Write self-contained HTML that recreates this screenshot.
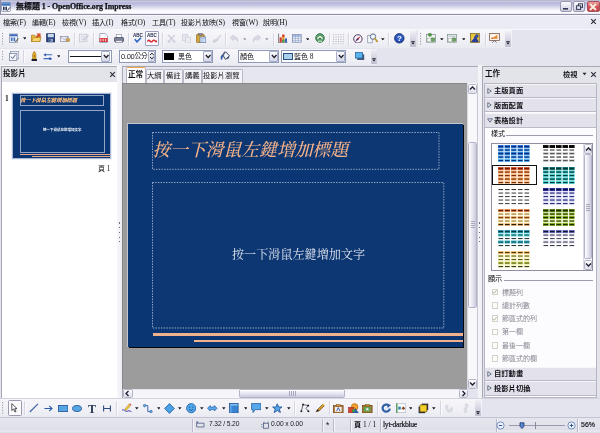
<!DOCTYPE html>
<html lang="zh-TW"><head><meta charset="utf-8"><title>OpenOffice.org Impress</title><style>
html,body{margin:0;padding:0}
body{width:600px;height:433px;overflow:hidden;position:relative;background:#e4e4ee;font-family:"Liberation Serif",serif;font-size:7px}
#w{position:absolute;left:0;top:0;width:600px;height:433px;overflow:hidden;filter:blur(0.45px)}
#w div,#w .a{position:absolute;box-sizing:border-box}
.t{will-change:transform;position:absolute;display:flex;align-items:center;white-space:nowrap;line-height:1}
.t svg{display:block;flex:none}
.t .c{font-family:"Liberation Sans","Noto Sans CJK TC",sans-serif;font-weight:normal;font-style:normal;letter-spacing:0;flex:none}
.t .cb{font-family:"Liberation Sans","Noto Sans CJK TC",sans-serif;font-weight:bold;font-style:normal;letter-spacing:0;flex:none}
.t .cs{font-family:"Liberation Serif","Noto Serif CJK SC",serif;font-style:normal;letter-spacing:0;flex:none}
.t .sk{display:inline-block;transform:skewX(-14deg);transform-origin:0 88%}
.t .l{font-weight:inherit;font-size:var(--l,1.06em)}
</style></head><body>
<div id="w">
<div style="left:0px;top:0px;width:600px;height:15.2px;background:linear-gradient(#a2a2b4 0,#d2d2e8 1px,#b8b8da 2.4px,#c2c2e0 5px,#e2e2f0 8px,#f8f8fc 10.4px,#ffffff 13.4px,#a9a6c0 13.9px,#8f8bab 14.6px,#9a97b4 15.2px)"></div>
<svg class="a" style="left:1px;top:1.6px;" width="10" height="10" viewBox="0 0 10 10"><rect x="0.4" y="0.4" width="9" height="9" rx="0.8" fill="#fafbfe" stroke="#6a7896" stroke-width="0.7"/><rect x="0.7" y="0.7" width="8.4" height="3" fill="#3b74bc"/><rect x="0.7" y="0.7" width="8.4" height="1.2" fill="#6a9ad4"/><rect x="2" y="4.6" width="1.6" height="3.6" fill="#2a3a5c"/><rect x="4.4" y="4.6" width="1.6" height="3.6" fill="#2a3a5c"/><path d="M6.4 8.6L8.8 5.4" stroke="#3a3a4a" stroke-width="1"/></svg>
<div style="left:0px;top:0px;width:0.8px;height:15px;background:#8a8aa4"></div>
<span class="t" style="left:16px;top:1.4px;height:12px;font-size:8px;color:#0c0c12;font-weight:bold;letter-spacing:-0.1px;--l:7.9px;-webkit-text-stroke:0.25px #0c0c12;stroke:#0c0c12;stroke-width:45;"><span class="cb">無標題</span><span class="l">&nbsp;1 - OpenOffice.org Impress</span></span>
<div style="left:560px;top:1.2px;width:11.5px;height:11.2px;border-radius:2px;border:1px solid #9a9ab2;background:linear-gradient(#fbfbfe,#dcdcea 70%,#c9c9dc)"></div>
<svg class="a" style="left:563px;top:8px;" width="5" height="2" viewBox="0 0 5 2"><rect width="5" height="1.6" fill="#333a55"/></svg>
<div style="left:573px;top:1.2px;width:11.5px;height:11.2px;border-radius:2px;border:1px solid #9a9ab2;background:linear-gradient(#fbfbfe,#dcdcea 70%,#c9c9dc)"></div>
<svg class="a" style="left:575.5px;top:3px;" width="7" height="7" viewBox="0 0 7 7"><rect x="2.5" y="0.8" width="4" height="3.6" fill="none" stroke="#333a55" stroke-width="1"/><rect x="0.6" y="2.8" width="4" height="3.6" fill="#e8e8f2" stroke="#333a55" stroke-width="1"/></svg>
<div style="left:587px;top:1.2px;width:12.5px;height:11.2px;border-radius:2px;border:1px solid #a8505a;background:linear-gradient(#eaa09c,#d4505a 55%,#c4444c)"></div>
<svg class="a" style="left:589.2px;top:2.8px;" width="8" height="8" viewBox="0 0 8 8"><path d="M1 1L7 7M7 1L1 7" stroke="#fbeedd" stroke-width="1.9"/></svg>
<div style="left:0px;top:15px;width:600px;height:14px;background:#ebebf3;border-top:1px solid #f6f6fb"></div>
<span class="t" style="left:3px;top:16.5px;height:11px;font-size:7px;color:#0c0c12;stroke:#0c0c12;stroke-width:30;"><span class="c">檔案</span><span class="l">(F)</span></span>
<span class="t" style="left:32px;top:16.5px;height:11px;font-size:7px;color:#0c0c12;stroke:#0c0c12;stroke-width:30;"><span class="c">編輯</span><span class="l">(E)</span></span>
<span class="t" style="left:62px;top:16.5px;height:11px;font-size:7px;color:#0c0c12;stroke:#0c0c12;stroke-width:30;"><span class="c">檢視</span><span class="l">(V)</span></span>
<span class="t" style="left:92px;top:16.5px;height:11px;font-size:7px;color:#0c0c12;stroke:#0c0c12;stroke-width:30;"><span class="c">插入</span><span class="l">(I)</span></span>
<span class="t" style="left:121px;top:16.5px;height:11px;font-size:7px;color:#0c0c12;stroke:#0c0c12;stroke-width:30;"><span class="c">格式</span><span class="l">(O)</span></span>
<span class="t" style="left:152px;top:16.5px;height:11px;font-size:7px;color:#0c0c12;stroke:#0c0c12;stroke-width:30;"><span class="c">工具</span><span class="l">(T)</span></span>
<span class="t" style="left:181px;top:16.5px;height:11px;font-size:7px;color:#0c0c12;stroke:#0c0c12;stroke-width:30;"><span class="c">投影片放映</span><span class="l">(S)</span></span>
<span class="t" style="left:232px;top:16.5px;height:11px;font-size:7px;color:#0c0c12;stroke:#0c0c12;stroke-width:30;"><span class="c">視窗</span><span class="l">(W)</span></span>
<span class="t" style="left:263px;top:16.5px;height:11px;font-size:7px;color:#0c0c12;stroke:#0c0c12;stroke-width:30;"><span class="c">說明</span><span class="l">(H)</span></span>
<svg class="a" style="left:589.5px;top:17.5px;" width="7" height="7" viewBox="0 0 7 7"><path d="M1.2 1.2L5.8 5.8M5.8 1.2L1.2 5.8" stroke="#2a2a38" stroke-width="1.1"/></svg>
<div style="left:0px;top:29px;width:600px;height:36px;background:#e4e4ee;border-top:1px solid #f7f7fb"></div>
<div style="left:0px;top:30px;width:416.4px;height:17.6px;background:linear-gradient(#f6f6fa,#f0f0f6 60%,#eaeaf2);border-radius:1px"></div>
<div style="left:418px;top:30px;width:94px;height:17.6px;background:linear-gradient(#f6f6fa,#f0f0f6 60%,#eaeaf2);border-radius:1px"></div>
<div style="left:0px;top:48.6px;width:377.4px;height:16px;background:linear-gradient(#f6f6fa,#f0f0f6 60%,#eaeaf2);border-radius:1px"></div>
<div style="left:0px;top:65px;width:119px;height:333px;background:#e4e4ee;border-top:1px solid #fbfbfe"></div>
<div style="left:0.6px;top:66px;width:117px;height:332px;background:#e3e3ea;border:1px solid #a9a9b6;border-bottom:none"></div>
<span class="t" style="left:3.2px;top:68.4px;height:11.6px;font-size:7.6px;color:#101018;stroke:#101018;stroke-width:40;"><span class="cb">投影片</span></span>
<svg class="a" style="left:108.5px;top:70.5px;" width="7" height="7" viewBox="0 0 7 7"><path d="M1.2 1.2L5.8 5.8M5.8 1.2L1.2 5.8" stroke="#2a2a38" stroke-width="1.1"/></svg>
<div style="left:1.6px;top:82px;width:115px;height:315.6px;background:#ffffff"></div>
<span class="t" style="left:4.6px;top:92.5px;height:11px;font-size:7px;color:#111;font-weight:bold;"><span class="l">1</span></span>
<div style="left:12px;top:92.5px;width:99px;height:66px;background:#0a3773;border:1px solid #a9b7d2;box-shadow:0 0 0 0.6px #dfe5f2"></div>
<div style="left:19.6078px;top:95.1937px;width:84.0938px;height:11.0565px;border:0.6px solid #93a6c8"></div>
<div style="left:19.6662px;top:110.023px;width:85.4977px;height:42.8513px;border:0.6px solid #93a6c8"></div>
<span class="t" style="left:20.2512px;top:96.3089px;height:9.17725px;font-size:5.17725px;color:#f4a860;filter:drop-shadow(0 0 0.3px #f7d6b8);"><span class="cs sk" style="font-weight:bold">按一下滑鼠左鍵增加標題</span></span>
<span class="t" style="left:43.0662px;top:127.416px;height:7.51px;font-size:3.51px;color:#f4f6fb;"><span class="cb">按一下滑鼠左鍵增加文字</span></span>
<div style="left:19.8125px;top:154.249px;width:90.675px;height:0.9px;background:#e9a988"></div>
<div style="left:31.9512px;top:156.092px;width:78.5362px;height:0.9px;background:#e9a988"></div>
<span class="t" style="left:98px;top:163px;height:11px;font-size:7px;color:#15151c;"><span class="c">頁</span><span class="l">&nbsp;1</span></span>
<div style="left:117.4px;top:65px;width:4.4px;height:333px;background:linear-gradient(90deg,#f8f8fb,#ececf3)"></div>
<div style="left:118.8px;top:222.4px;width:1.2px;height:1.3px;background:#6a6a80"></div>
<div style="left:118.8px;top:227.1px;width:1.2px;height:1.3px;background:#6a6a80"></div>
<div style="left:118.8px;top:231.8px;width:1.2px;height:1.3px;background:#6a6a80"></div>
<div style="left:118.8px;top:236.5px;width:1.2px;height:1.3px;background:#6a6a80"></div>
<div style="left:118.8px;top:241.2px;width:1.2px;height:1.3px;background:#6a6a80"></div>
<div style="left:121.6px;top:65.6px;width:357px;height:332.6px;background:#e6e6ee;border:1px solid #a9a9b6;border-bottom:none"></div>
<div style="left:145.5px;top:69px;width:18.5px;height:13.5px;background:#f3f3f8;border:1px solid #b9b9ca;border-bottom:none;border-radius:1.5px 1.5px 0 0"></div>
<span class="t" style="left:147.3px;top:70.15px;height:11.3px;font-size:7.3px;color:#101018;"><span class="c">大綱</span></span>
<div style="left:164px;top:69px;width:19px;height:13.5px;background:#f3f3f8;border:1px solid #b9b9ca;border-bottom:none;border-radius:1.5px 1.5px 0 0"></div>
<span class="t" style="left:165.8px;top:70.15px;height:11.3px;font-size:7.3px;color:#101018;"><span class="c">備註</span></span>
<div style="left:183px;top:69px;width:18.5px;height:13.5px;background:#f3f3f8;border:1px solid #b9b9ca;border-bottom:none;border-radius:1.5px 1.5px 0 0"></div>
<span class="t" style="left:184.8px;top:70.15px;height:11.3px;font-size:7.3px;color:#101018;"><span class="c">講義</span></span>
<div style="left:201.5px;top:69px;width:41px;height:13.5px;background:#f3f3f8;border:1px solid #b9b9ca;border-bottom:none;border-radius:1.5px 1.5px 0 0"></div>
<span class="t" style="left:203.3px;top:70.15px;height:11.3px;font-size:7.3px;color:#101018;"><span class="c">投影片瀏覽</span></span>
<div style="left:125.7px;top:67px;width:20.3px;height:16.5px;background:#fdfdfe;border:1px solid #b5b5c6;border-bottom:none;border-top:1.6px solid #f2a646;border-radius:1.5px 1.5px 0 0"></div>
<span class="t" style="left:128.3px;top:69.2px;height:11.6px;font-size:7.6px;color:#101018;"><span class="cb">正常</span></span>
<div style="left:121.6px;top:82.6px;width:345.4px;height:306.2px;background:#9c9c9c;border-top:1px solid #878787;border-left:1px solid #868686"></div>
<div style="left:128.5px;top:125px;width:335px;height:223px;background:#05070f"></div>
<div style="left:127px;top:123.4px;width:335.5px;height:223.3px;background:#0a3773;border-top:0.8px solid #c2c6cf;border-left:0.8px solid #c2c6cf"></div>
<svg class="a" style="left:150.8px;top:130.5px;" width="289.5" height="39.8" viewBox="0 0 289.5 39.8"><rect x="1.5" y="1.5" width="286.5" height="36.8" fill="#0d3873" fill-opacity="0.5" stroke="#c3cce3" stroke-width="0.75" stroke-dasharray="1.5 1.2"/></svg>
<svg class="a" style="left:151px;top:181.2px;" width="294.3" height="148.5" viewBox="0 0 294.3 148.5"><rect x="1.5" y="1.5" width="291.3" height="145.5" fill="#0d3873" fill-opacity="0.5" stroke="#c3cce3" stroke-width="0.75" stroke-dasharray="1.5 1.2"/></svg>
<span class="t" style="left:152.3px;top:140.1px;height:21.8px;font-size:17.8px;color:#f5b288;"><span class="cs sk" style="font-weight:500">按一下滑鼠左鍵增加標題</span></span>
<span class="t" style="left:231.6px;top:246.55px;height:16.1px;font-size:12.1px;color:#e0e4ee;"><span class="cs" style="font-weight:normal">按一下滑鼠左鍵增加文字</span></span>
<div style="left:152.5px;top:333.4px;width:310px;height:2.8px;background:#f0b28c"></div>
<div style="left:194px;top:339.7px;width:268.5px;height:2.8px;background:#f0b28c"></div>
<div style="left:467px;top:83px;width:10.8px;height:306px;background:#f8f8fb;border-left:1px solid #d9d9e2;border-right:1px solid #c9c9d4"></div>
<div style="left:467.8px;top:83.5px;width:9.4px;height:10px;background:linear-gradient(#fcfcff,#dedeea);border:1px solid #b4b4c8;border-radius:1.5px"></div>
<svg class="a" style="left:468px;top:84px;" width="9" height="9" viewBox="0 0 9 9"><path d="M2 5.5L4.5 3L7 5.5" fill="none" stroke="#1c1c2c" stroke-width="1.3"/></svg>
<div style="left:467.8px;top:378.5px;width:9.4px;height:10px;background:linear-gradient(#fcfcff,#dedeea);border:1px solid #b4b4c8;border-radius:1.5px"></div>
<svg class="a" style="left:468px;top:379px;" width="9" height="9" viewBox="0 0 9 9"><path d="M2 3.5L4.5 6L7 3.5" fill="none" stroke="#1c1c2c" stroke-width="1.3"/></svg>
<div style="left:467.8px;top:141.5px;width:9.4px;height:166px;background:linear-gradient(90deg,#ffffff,#e0e0ee 60%,#c9c9dc);border:1px solid #b4b4c8;border-radius:1.5px"></div>
<div style="left:470.5px;top:221px;width:4.5px;height:0.8px;background:#a8a8bc"></div>
<div style="left:470.5px;top:223px;width:4.5px;height:0.8px;background:#a8a8bc"></div>
<div style="left:470.5px;top:225px;width:4.5px;height:0.8px;background:#a8a8bc"></div>
<div style="left:470.5px;top:227px;width:4.5px;height:0.8px;background:#a8a8bc"></div>
<div style="left:122.5px;top:388.5px;width:345.5px;height:9.7px;background:#f6f6fa;border-top:1px solid #e2e2ea"></div>
<div style="left:123px;top:388.7px;width:9.5px;height:9.3px;background:linear-gradient(#fcfcff,#dedeea);border:1px solid #b4b4c8;border-radius:1.5px"></div>
<svg class="a" style="left:123.25px;top:388.85px;" width="9" height="9" viewBox="0 0 9 9"><path d="M5.5 2L3 4.5L5.5 7" fill="none" stroke="#1c1c2c" stroke-width="1.3"/></svg>
<div style="left:458.5px;top:388.7px;width:9.5px;height:9.3px;background:linear-gradient(#fcfcff,#dedeea);border:1px solid #b4b4c8;border-radius:1.5px"></div>
<svg class="a" style="left:458.75px;top:388.85px;" width="9" height="9" viewBox="0 0 9 9"><path d="M3.5 2L6 4.5L3.5 7" fill="none" stroke="#1c1c2c" stroke-width="1.3"/></svg>
<div style="left:238.7px;top:388.8px;width:106.6px;height:9px;background:linear-gradient(#ffffff,#e0e0ee 60%,#c9c9dc);border:1px solid #b4b4c8;border-radius:1.5px"></div>
<div style="left:288.5px;top:391px;width:0.8px;height:4.5px;background:#a8a8bc"></div>
<div style="left:290.5px;top:391px;width:0.8px;height:4.5px;background:#a8a8bc"></div>
<div style="left:292.5px;top:391px;width:0.8px;height:4.5px;background:#a8a8bc"></div>
<div style="left:294.5px;top:391px;width:0.8px;height:4.5px;background:#a8a8bc"></div>
<div style="left:468px;top:388.5px;width:10px;height:9.7px;background:#e4e4ee"></div>
<div style="left:477.8px;top:65px;width:6px;height:333px;background:linear-gradient(90deg,#f6f6fa,#ebebf2)"></div>
<div style="left:479px;top:222.4px;width:1.2px;height:1.3px;background:#6a6a80"></div>
<div style="left:479px;top:227.1px;width:1.2px;height:1.3px;background:#6a6a80"></div>
<div style="left:479px;top:231.8px;width:1.2px;height:1.3px;background:#6a6a80"></div>
<div style="left:479px;top:236.5px;width:1.2px;height:1.3px;background:#6a6a80"></div>
<div style="left:479px;top:241.2px;width:1.2px;height:1.3px;background:#6a6a80"></div>
<div style="left:482.4px;top:65.6px;width:117.6px;height:332.6px;background:#e3e3ea;border-top:1px solid #a9a9b6;border-left:1px solid #a9a9b6"></div>
<span class="t" style="left:484.6px;top:68.4px;height:11.6px;font-size:7.6px;color:#101018;stroke:#101018;stroke-width:40;"><span class="cb">工作</span></span>
<span class="t" style="left:563px;top:68.6px;height:11.2px;font-size:7.2px;color:#15151c;"><span class="cb">檢視</span></span>
<svg class="a" style="left:581.5px;top:72px;" width="5" height="4" viewBox="0 0 5 4"><path d="M0.5 0.8H4.5L2.5 3.2Z" fill="#222"/></svg>
<svg class="a" style="left:589.5px;top:70.5px;" width="7" height="7" viewBox="0 0 7 7"><path d="M1.2 1.2L5.8 5.8M5.8 1.2L1.2 5.8" stroke="#2a2a38" stroke-width="1.1"/></svg>
<div style="left:484.2px;top:83px;width:113px;height:314.5px;background:#fcfcfe;border:1px solid #b6b6c6"></div>
<div style="left:485px;top:83.8px;width:111.4px;height:13.8px;background:#e3e2ea;border-top:1px solid #f6f6fa;border-bottom:1px solid #b9b9c8"></div>
<svg class="a" style="left:487px;top:87.7px;" width="5" height="6" viewBox="0 0 5 6"><path d="M0.8 0.6V5.4L4.2 3Z" fill="#eceff5" stroke="#4a5670" stroke-width="0.8"/></svg>
<span class="t" style="left:494px;top:85.05px;height:11.3px;font-size:7.3px;color:#101018;"><span class="cb">主版頁面</span></span>
<div style="left:485px;top:98px;width:111.4px;height:14.4px;background:#e3e2ea;border-top:1px solid #f6f6fa;border-bottom:1px solid #b9b9c8"></div>
<svg class="a" style="left:487px;top:102.2px;" width="5" height="6" viewBox="0 0 5 6"><path d="M0.8 0.6V5.4L4.2 3Z" fill="#eceff5" stroke="#4a5670" stroke-width="0.8"/></svg>
<span class="t" style="left:494px;top:99.55px;height:11.3px;font-size:7.3px;color:#101018;"><span class="cb">版面配置</span></span>
<div style="left:485px;top:113px;width:111.4px;height:15px;background:#e3e2ea;border-top:1px solid #f6f6fa;border-bottom:1px solid #b9b9c8"></div>
<svg class="a" style="left:486.5px;top:118px;" width="6" height="5" viewBox="0 0 6 5"><path d="M0.6 0.8H5.4L3 4.2Z" fill="#eceff5" stroke="#4a5670" stroke-width="0.8"/></svg>
<span class="t" style="left:494px;top:114.85px;height:11.3px;font-size:7.3px;color:#101018;"><span class="cb">表格設計</span></span>
<span class="t" style="left:491px;top:129.45px;height:11.1px;font-size:7.1px;color:#08080c;"><span class="c">樣式</span></span>
<div style="left:506px;top:135.2px;width:87px;height:0.8px;background:#9d9dad"></div>
<div style="left:490.7px;top:142.7px;width:102.3px;height:128.3px;background:#fff;border:1px solid #8e8ea0"></div>
<div style="left:583.3px;top:143.5px;width:9px;height:126.7px;background:#f4f4f9;border-left:1px solid #dcdce6"></div>
<div style="left:583.7px;top:144px;width:8.6px;height:10px;background:linear-gradient(#fcfcff,#dedeea);border:1px solid #b4b4c8;border-radius:1.5px"></div>
<svg class="a" style="left:583.5px;top:144.5px;" width="9" height="9" viewBox="0 0 9 9"><path d="M2 5.5L4.5 3L7 5.5" fill="none" stroke="#1c1c2c" stroke-width="1.3"/></svg>
<div style="left:583.7px;top:259.5px;width:8.6px;height:10.3px;background:linear-gradient(#fcfcff,#dedeea);border:1px solid #b4b4c8;border-radius:1.5px"></div>
<svg class="a" style="left:583.5px;top:260.15px;" width="9" height="9" viewBox="0 0 9 9"><path d="M2 3.5L4.5 6L7 3.5" fill="none" stroke="#1c1c2c" stroke-width="1.3"/></svg>
<div style="left:583.7px;top:154.4px;width:8.6px;height:104.6px;background:linear-gradient(90deg,#ffffff,#e0e0ee 60%,#c9c9dc);border:1px solid #b4b4c8;border-radius:1.5px"></div>
<div style="left:585.8px;top:203.6px;width:4.2px;height:0.8px;background:#a8a8bc"></div>
<div style="left:585.8px;top:205.6px;width:4.2px;height:0.8px;background:#a8a8bc"></div>
<div style="left:585.8px;top:207.6px;width:4.2px;height:0.8px;background:#a8a8bc"></div>
<div style="left:585.8px;top:209.6px;width:4.2px;height:0.8px;background:#a8a8bc"></div>
<svg class="a" style="left:498.3px;top:145.2px;" width="32" height="17.5" viewBox="0 0 32 17.5"><rect x="0" y="0" width="5.6" height="3" fill="#2a6fd0"/><rect x="0.5" y="1" width="4.6" height="1.1" fill="#0c2a7c"/><rect x="6.5" y="0" width="5.6" height="3" fill="#2a6fd0"/><rect x="7" y="1" width="4.6" height="1.1" fill="#0c2a7c"/><rect x="13" y="0" width="5.6" height="3" fill="#2a6fd0"/><rect x="13.5" y="1" width="4.6" height="1.1" fill="#0c2a7c"/><rect x="19.5" y="0" width="5.6" height="3" fill="#2a6fd0"/><rect x="20" y="1" width="4.6" height="1.1" fill="#0c2a7c"/><rect x="26" y="0" width="5.6" height="3" fill="#2a6fd0"/><rect x="26.5" y="1" width="4.6" height="1.1" fill="#0c2a7c"/><rect x="0" y="3.5" width="5.6" height="3" fill="#3f9be2"/><rect x="0.5" y="4.5" width="4.6" height="1.1" fill="#0c2a7c"/><rect x="6.5" y="3.5" width="5.6" height="3" fill="#3f9be2"/><rect x="7" y="4.5" width="4.6" height="1.1" fill="#0c2a7c"/><rect x="13" y="3.5" width="5.6" height="3" fill="#3f9be2"/><rect x="13.5" y="4.5" width="4.6" height="1.1" fill="#0c2a7c"/><rect x="19.5" y="3.5" width="5.6" height="3" fill="#3f9be2"/><rect x="20" y="4.5" width="4.6" height="1.1" fill="#0c2a7c"/><rect x="26" y="3.5" width="5.6" height="3" fill="#3f9be2"/><rect x="26.5" y="4.5" width="4.6" height="1.1" fill="#0c2a7c"/><rect x="0" y="7" width="5.6" height="3" fill="#2f7fd4"/><rect x="0.5" y="8" width="4.6" height="1.1" fill="#0c2a7c"/><rect x="6.5" y="7" width="5.6" height="3" fill="#2f7fd4"/><rect x="7" y="8" width="4.6" height="1.1" fill="#0c2a7c"/><rect x="13" y="7" width="5.6" height="3" fill="#2f7fd4"/><rect x="13.5" y="8" width="4.6" height="1.1" fill="#0c2a7c"/><rect x="19.5" y="7" width="5.6" height="3" fill="#2f7fd4"/><rect x="20" y="8" width="4.6" height="1.1" fill="#0c2a7c"/><rect x="26" y="7" width="5.6" height="3" fill="#2f7fd4"/><rect x="26.5" y="8" width="4.6" height="1.1" fill="#0c2a7c"/><rect x="0" y="10.5" width="5.6" height="3" fill="#3f9be2"/><rect x="0.5" y="11.5" width="4.6" height="1.1" fill="#0c2a7c"/><rect x="6.5" y="10.5" width="5.6" height="3" fill="#3f9be2"/><rect x="7" y="11.5" width="4.6" height="1.1" fill="#0c2a7c"/><rect x="13" y="10.5" width="5.6" height="3" fill="#3f9be2"/><rect x="13.5" y="11.5" width="4.6" height="1.1" fill="#0c2a7c"/><rect x="19.5" y="10.5" width="5.6" height="3" fill="#3f9be2"/><rect x="20" y="11.5" width="4.6" height="1.1" fill="#0c2a7c"/><rect x="26" y="10.5" width="5.6" height="3" fill="#3f9be2"/><rect x="26.5" y="11.5" width="4.6" height="1.1" fill="#0c2a7c"/><rect x="0" y="14" width="5.6" height="3" fill="#5ab6ee"/><rect x="0.5" y="15" width="4.6" height="1.1" fill="#0c2a7c"/><rect x="6.5" y="14" width="5.6" height="3" fill="#5ab6ee"/><rect x="7" y="15" width="4.6" height="1.1" fill="#0c2a7c"/><rect x="13" y="14" width="5.6" height="3" fill="#5ab6ee"/><rect x="13.5" y="15" width="4.6" height="1.1" fill="#0c2a7c"/><rect x="19.5" y="14" width="5.6" height="3" fill="#5ab6ee"/><rect x="20" y="15" width="4.6" height="1.1" fill="#0c2a7c"/><rect x="26" y="14" width="5.6" height="3" fill="#5ab6ee"/><rect x="26.5" y="15" width="4.6" height="1.1" fill="#0c2a7c"/></svg>
<svg class="a" style="left:543.4px;top:145.2px;" width="32" height="17.5" viewBox="0 0 32 17.5"><rect x="0" y="0" width="5.6" height="3" fill="#161616"/><rect x="0.5" y="1" width="4.6" height="1.1" fill="#000"/><rect x="6.5" y="0" width="5.6" height="3" fill="#161616"/><rect x="7" y="1" width="4.6" height="1.1" fill="#000"/><rect x="13" y="0" width="5.6" height="3" fill="#161616"/><rect x="13.5" y="1" width="4.6" height="1.1" fill="#000"/><rect x="19.5" y="0" width="5.6" height="3" fill="#161616"/><rect x="20" y="1" width="4.6" height="1.1" fill="#000"/><rect x="26" y="0" width="5.6" height="3" fill="#161616"/><rect x="26.5" y="1" width="4.6" height="1.1" fill="#000"/><rect x="0.5" y="4.5" width="4.6" height="1.1" fill="#333"/><rect x="7" y="4.5" width="4.6" height="1.1" fill="#333"/><rect x="13.5" y="4.5" width="4.6" height="1.1" fill="#333"/><rect x="20" y="4.5" width="4.6" height="1.1" fill="#333"/><rect x="26.5" y="4.5" width="4.6" height="1.1" fill="#333"/><rect x="0" y="7" width="5.6" height="3" fill="#d4d4d4"/><rect x="0.5" y="8" width="4.6" height="1.1" fill="#555"/><rect x="6.5" y="7" width="5.6" height="3" fill="#d4d4d4"/><rect x="7" y="8" width="4.6" height="1.1" fill="#555"/><rect x="13" y="7" width="5.6" height="3" fill="#d4d4d4"/><rect x="13.5" y="8" width="4.6" height="1.1" fill="#555"/><rect x="19.5" y="7" width="5.6" height="3" fill="#d4d4d4"/><rect x="20" y="8" width="4.6" height="1.1" fill="#555"/><rect x="26" y="7" width="5.6" height="3" fill="#d4d4d4"/><rect x="26.5" y="8" width="4.6" height="1.1" fill="#555"/><rect x="0.5" y="11.5" width="4.6" height="1.1" fill="#222"/><rect x="7" y="11.5" width="4.6" height="1.1" fill="#222"/><rect x="13.5" y="11.5" width="4.6" height="1.1" fill="#222"/><rect x="20" y="11.5" width="4.6" height="1.1" fill="#222"/><rect x="26.5" y="11.5" width="4.6" height="1.1" fill="#222"/><rect x="0" y="14" width="5.6" height="3" fill="#d4d4d4"/><rect x="0.5" y="15" width="4.6" height="1.1" fill="#555"/><rect x="6.5" y="14" width="5.6" height="3" fill="#d4d4d4"/><rect x="7" y="15" width="4.6" height="1.1" fill="#555"/><rect x="13" y="14" width="5.6" height="3" fill="#d4d4d4"/><rect x="13.5" y="15" width="4.6" height="1.1" fill="#555"/><rect x="19.5" y="14" width="5.6" height="3" fill="#d4d4d4"/><rect x="20" y="15" width="4.6" height="1.1" fill="#555"/><rect x="26" y="14" width="5.6" height="3" fill="#d4d4d4"/><rect x="26.5" y="15" width="4.6" height="1.1" fill="#555"/></svg>
<div style="left:492.2px;top:165px;width:45px;height:20.4px;border:1.8px solid #111"></div>
<svg class="a" style="left:498.3px;top:166.5px;" width="32" height="17.5" viewBox="0 0 32 17.5"><rect x="0" y="0" width="5.6" height="3" fill="#d4532c"/><rect x="0.5" y="1" width="4.6" height="1.1" fill="#6a1c08"/><rect x="6.5" y="0" width="5.6" height="3" fill="#d4532c"/><rect x="7" y="1" width="4.6" height="1.1" fill="#6a1c08"/><rect x="13" y="0" width="5.6" height="3" fill="#d4532c"/><rect x="13.5" y="1" width="4.6" height="1.1" fill="#6a1c08"/><rect x="19.5" y="0" width="5.6" height="3" fill="#d4532c"/><rect x="20" y="1" width="4.6" height="1.1" fill="#6a1c08"/><rect x="26" y="0" width="5.6" height="3" fill="#d4532c"/><rect x="26.5" y="1" width="4.6" height="1.1" fill="#6a1c08"/><rect x="0" y="3.5" width="5.6" height="3" fill="#f19d54"/><rect x="0.5" y="4.5" width="4.6" height="1.1" fill="#7c2c0c"/><rect x="6.5" y="3.5" width="5.6" height="3" fill="#f19d54"/><rect x="7" y="4.5" width="4.6" height="1.1" fill="#7c2c0c"/><rect x="13" y="3.5" width="5.6" height="3" fill="#f19d54"/><rect x="13.5" y="4.5" width="4.6" height="1.1" fill="#7c2c0c"/><rect x="19.5" y="3.5" width="5.6" height="3" fill="#f19d54"/><rect x="20" y="4.5" width="4.6" height="1.1" fill="#7c2c0c"/><rect x="26" y="3.5" width="5.6" height="3" fill="#f19d54"/><rect x="26.5" y="4.5" width="4.6" height="1.1" fill="#7c2c0c"/><rect x="0" y="7" width="5.6" height="3" fill="#f6bd84"/><rect x="0.5" y="8" width="4.6" height="1.1" fill="#7c2c0c"/><rect x="6.5" y="7" width="5.6" height="3" fill="#f6bd84"/><rect x="7" y="8" width="4.6" height="1.1" fill="#7c2c0c"/><rect x="13" y="7" width="5.6" height="3" fill="#f6bd84"/><rect x="13.5" y="8" width="4.6" height="1.1" fill="#7c2c0c"/><rect x="19.5" y="7" width="5.6" height="3" fill="#f6bd84"/><rect x="20" y="8" width="4.6" height="1.1" fill="#7c2c0c"/><rect x="26" y="7" width="5.6" height="3" fill="#f6bd84"/><rect x="26.5" y="8" width="4.6" height="1.1" fill="#7c2c0c"/><rect x="0" y="10.5" width="5.6" height="3" fill="#f19d54"/><rect x="0.5" y="11.5" width="4.6" height="1.1" fill="#7c2c0c"/><rect x="6.5" y="10.5" width="5.6" height="3" fill="#f19d54"/><rect x="7" y="11.5" width="4.6" height="1.1" fill="#7c2c0c"/><rect x="13" y="10.5" width="5.6" height="3" fill="#f19d54"/><rect x="13.5" y="11.5" width="4.6" height="1.1" fill="#7c2c0c"/><rect x="19.5" y="10.5" width="5.6" height="3" fill="#f19d54"/><rect x="20" y="11.5" width="4.6" height="1.1" fill="#7c2c0c"/><rect x="26" y="10.5" width="5.6" height="3" fill="#f19d54"/><rect x="26.5" y="11.5" width="4.6" height="1.1" fill="#7c2c0c"/><rect x="0" y="14" width="5.6" height="3" fill="#f8cfa0"/><rect x="0.5" y="15" width="4.6" height="1.1" fill="#7c2c0c"/><rect x="6.5" y="14" width="5.6" height="3" fill="#f8cfa0"/><rect x="7" y="15" width="4.6" height="1.1" fill="#7c2c0c"/><rect x="13" y="14" width="5.6" height="3" fill="#f8cfa0"/><rect x="13.5" y="15" width="4.6" height="1.1" fill="#7c2c0c"/><rect x="19.5" y="14" width="5.6" height="3" fill="#f8cfa0"/><rect x="20" y="15" width="4.6" height="1.1" fill="#7c2c0c"/><rect x="26" y="14" width="5.6" height="3" fill="#f8cfa0"/><rect x="26.5" y="15" width="4.6" height="1.1" fill="#7c2c0c"/></svg>
<svg class="a" style="left:543.4px;top:166.5px;" width="32" height="17.5" viewBox="0 0 32 17.5"><rect x="0" y="0" width="5.6" height="3" fill="#126e70"/><rect x="0.5" y="1" width="4.6" height="1.1" fill="#013838"/><rect x="6.5" y="0" width="5.6" height="3" fill="#126e70"/><rect x="7" y="1" width="4.6" height="1.1" fill="#013838"/><rect x="13" y="0" width="5.6" height="3" fill="#126e70"/><rect x="13.5" y="1" width="4.6" height="1.1" fill="#013838"/><rect x="19.5" y="0" width="5.6" height="3" fill="#126e70"/><rect x="20" y="1" width="4.6" height="1.1" fill="#013838"/><rect x="26" y="0" width="5.6" height="3" fill="#126e70"/><rect x="26.5" y="1" width="4.6" height="1.1" fill="#013838"/><rect x="0" y="3.5" width="5.6" height="3" fill="#2cb6b6"/><rect x="0.5" y="4.5" width="4.6" height="1.1" fill="#013838"/><rect x="6.5" y="3.5" width="5.6" height="3" fill="#2cb6b6"/><rect x="7" y="4.5" width="4.6" height="1.1" fill="#013838"/><rect x="13" y="3.5" width="5.6" height="3" fill="#2cb6b6"/><rect x="13.5" y="4.5" width="4.6" height="1.1" fill="#013838"/><rect x="19.5" y="3.5" width="5.6" height="3" fill="#2cb6b6"/><rect x="20" y="4.5" width="4.6" height="1.1" fill="#013838"/><rect x="26" y="3.5" width="5.6" height="3" fill="#2cb6b6"/><rect x="26.5" y="4.5" width="4.6" height="1.1" fill="#013838"/><rect x="0" y="7" width="5.6" height="3" fill="#55d6d6"/><rect x="0.5" y="8" width="4.6" height="1.1" fill="#013838"/><rect x="6.5" y="7" width="5.6" height="3" fill="#55d6d6"/><rect x="7" y="8" width="4.6" height="1.1" fill="#013838"/><rect x="13" y="7" width="5.6" height="3" fill="#55d6d6"/><rect x="13.5" y="8" width="4.6" height="1.1" fill="#013838"/><rect x="19.5" y="7" width="5.6" height="3" fill="#55d6d6"/><rect x="20" y="8" width="4.6" height="1.1" fill="#013838"/><rect x="26" y="7" width="5.6" height="3" fill="#55d6d6"/><rect x="26.5" y="8" width="4.6" height="1.1" fill="#013838"/><rect x="0" y="10.5" width="5.6" height="3" fill="#2cb6b6"/><rect x="0.5" y="11.5" width="4.6" height="1.1" fill="#013838"/><rect x="6.5" y="10.5" width="5.6" height="3" fill="#2cb6b6"/><rect x="7" y="11.5" width="4.6" height="1.1" fill="#013838"/><rect x="13" y="10.5" width="5.6" height="3" fill="#2cb6b6"/><rect x="13.5" y="11.5" width="4.6" height="1.1" fill="#013838"/><rect x="19.5" y="10.5" width="5.6" height="3" fill="#2cb6b6"/><rect x="20" y="11.5" width="4.6" height="1.1" fill="#013838"/><rect x="26" y="10.5" width="5.6" height="3" fill="#2cb6b6"/><rect x="26.5" y="11.5" width="4.6" height="1.1" fill="#013838"/><rect x="0" y="14" width="5.6" height="3" fill="#55d6d6"/><rect x="0.5" y="15" width="4.6" height="1.1" fill="#013838"/><rect x="6.5" y="14" width="5.6" height="3" fill="#55d6d6"/><rect x="7" y="15" width="4.6" height="1.1" fill="#013838"/><rect x="13" y="14" width="5.6" height="3" fill="#55d6d6"/><rect x="13.5" y="15" width="4.6" height="1.1" fill="#013838"/><rect x="19.5" y="14" width="5.6" height="3" fill="#55d6d6"/><rect x="20" y="15" width="4.6" height="1.1" fill="#013838"/><rect x="26" y="14" width="5.6" height="3" fill="#55d6d6"/><rect x="26.5" y="15" width="4.6" height="1.1" fill="#013838"/></svg>
<svg class="a" style="left:498.3px;top:187.8px;" width="32" height="17.5" viewBox="0 0 32 17.5"><rect x="0.5" y="1" width="4.6" height="1.1" fill="#3a3a3a"/><rect x="7" y="1" width="4.6" height="1.1" fill="#3a3a3a"/><rect x="13.5" y="1" width="4.6" height="1.1" fill="#3a3a3a"/><rect x="20" y="1" width="4.6" height="1.1" fill="#3a3a3a"/><rect x="26.5" y="1" width="4.6" height="1.1" fill="#3a3a3a"/><rect x="0.5" y="4.5" width="4.6" height="1.1" fill="#4a4a4a"/><rect x="7" y="4.5" width="4.6" height="1.1" fill="#4a4a4a"/><rect x="13.5" y="4.5" width="4.6" height="1.1" fill="#4a4a4a"/><rect x="20" y="4.5" width="4.6" height="1.1" fill="#4a4a4a"/><rect x="26.5" y="4.5" width="4.6" height="1.1" fill="#4a4a4a"/><rect x="0.5" y="8" width="4.6" height="1.1" fill="#4a4a4a"/><rect x="7" y="8" width="4.6" height="1.1" fill="#4a4a4a"/><rect x="13.5" y="8" width="4.6" height="1.1" fill="#4a4a4a"/><rect x="20" y="8" width="4.6" height="1.1" fill="#4a4a4a"/><rect x="26.5" y="8" width="4.6" height="1.1" fill="#4a4a4a"/><rect x="0.5" y="11.5" width="4.6" height="1.1" fill="#4a4a4a"/><rect x="7" y="11.5" width="4.6" height="1.1" fill="#4a4a4a"/><rect x="13.5" y="11.5" width="4.6" height="1.1" fill="#4a4a4a"/><rect x="20" y="11.5" width="4.6" height="1.1" fill="#4a4a4a"/><rect x="26.5" y="11.5" width="4.6" height="1.1" fill="#4a4a4a"/><rect x="0.5" y="15" width="4.6" height="1.1" fill="#4a4a4a"/><rect x="7" y="15" width="4.6" height="1.1" fill="#4a4a4a"/><rect x="13.5" y="15" width="4.6" height="1.1" fill="#4a4a4a"/><rect x="20" y="15" width="4.6" height="1.1" fill="#4a4a4a"/><rect x="26.5" y="15" width="4.6" height="1.1" fill="#4a4a4a"/></svg>
<svg class="a" style="left:543.4px;top:187.8px;" width="32" height="17.5" viewBox="0 0 32 17.5"><rect x="0" y="0" width="5.6" height="3" fill="#2a2f96"/><rect x="0.5" y="1" width="4.6" height="1.1" fill="#0a0e50"/><rect x="6.5" y="0" width="5.6" height="3" fill="#2a2f96"/><rect x="7" y="1" width="4.6" height="1.1" fill="#0a0e50"/><rect x="13" y="0" width="5.6" height="3" fill="#2a2f96"/><rect x="13.5" y="1" width="4.6" height="1.1" fill="#0a0e50"/><rect x="19.5" y="0" width="5.6" height="3" fill="#2a2f96"/><rect x="20" y="1" width="4.6" height="1.1" fill="#0a0e50"/><rect x="26" y="0" width="5.6" height="3" fill="#2a2f96"/><rect x="26.5" y="1" width="4.6" height="1.1" fill="#0a0e50"/><rect x="0" y="3.5" width="5.6" height="3" fill="#c6c8ee"/><rect x="0.5" y="4.5" width="4.6" height="1.1" fill="#2a2f7a"/><rect x="6.5" y="3.5" width="5.6" height="3" fill="#c6c8ee"/><rect x="7" y="4.5" width="4.6" height="1.1" fill="#2a2f7a"/><rect x="13" y="3.5" width="5.6" height="3" fill="#c6c8ee"/><rect x="13.5" y="4.5" width="4.6" height="1.1" fill="#2a2f7a"/><rect x="19.5" y="3.5" width="5.6" height="3" fill="#c6c8ee"/><rect x="20" y="4.5" width="4.6" height="1.1" fill="#2a2f7a"/><rect x="26" y="3.5" width="5.6" height="3" fill="#c6c8ee"/><rect x="26.5" y="4.5" width="4.6" height="1.1" fill="#2a2f7a"/><rect x="0" y="7" width="5.6" height="3" fill="#e4e5f8"/><rect x="0.5" y="8" width="4.6" height="1.1" fill="#2a2f7a"/><rect x="6.5" y="7" width="5.6" height="3" fill="#e4e5f8"/><rect x="7" y="8" width="4.6" height="1.1" fill="#2a2f7a"/><rect x="13" y="7" width="5.6" height="3" fill="#e4e5f8"/><rect x="13.5" y="8" width="4.6" height="1.1" fill="#2a2f7a"/><rect x="19.5" y="7" width="5.6" height="3" fill="#e4e5f8"/><rect x="20" y="8" width="4.6" height="1.1" fill="#2a2f7a"/><rect x="26" y="7" width="5.6" height="3" fill="#e4e5f8"/><rect x="26.5" y="8" width="4.6" height="1.1" fill="#2a2f7a"/><rect x="0" y="10.5" width="5.6" height="3" fill="#c6c8ee"/><rect x="0.5" y="11.5" width="4.6" height="1.1" fill="#2a2f7a"/><rect x="6.5" y="10.5" width="5.6" height="3" fill="#c6c8ee"/><rect x="7" y="11.5" width="4.6" height="1.1" fill="#2a2f7a"/><rect x="13" y="10.5" width="5.6" height="3" fill="#c6c8ee"/><rect x="13.5" y="11.5" width="4.6" height="1.1" fill="#2a2f7a"/><rect x="19.5" y="10.5" width="5.6" height="3" fill="#c6c8ee"/><rect x="20" y="11.5" width="4.6" height="1.1" fill="#2a2f7a"/><rect x="26" y="10.5" width="5.6" height="3" fill="#c6c8ee"/><rect x="26.5" y="11.5" width="4.6" height="1.1" fill="#2a2f7a"/><rect x="0" y="14" width="5.6" height="3" fill="#e4e5f8"/><rect x="0.5" y="15" width="4.6" height="1.1" fill="#2a2f7a"/><rect x="6.5" y="14" width="5.6" height="3" fill="#e4e5f8"/><rect x="7" y="15" width="4.6" height="1.1" fill="#2a2f7a"/><rect x="13" y="14" width="5.6" height="3" fill="#e4e5f8"/><rect x="13.5" y="15" width="4.6" height="1.1" fill="#2a2f7a"/><rect x="19.5" y="14" width="5.6" height="3" fill="#e4e5f8"/><rect x="20" y="15" width="4.6" height="1.1" fill="#2a2f7a"/><rect x="26" y="14" width="5.6" height="3" fill="#e4e5f8"/><rect x="26.5" y="15" width="4.6" height="1.1" fill="#2a2f7a"/></svg>
<svg class="a" style="left:498.3px;top:209px;" width="32" height="17.5" viewBox="0 0 32 17.5"><rect x="0" y="0" width="5.6" height="3" fill="#e58a4a"/><rect x="0.5" y="1" width="4.6" height="1.1" fill="#5a1c08"/><rect x="6.5" y="0" width="5.6" height="3" fill="#e58a4a"/><rect x="7" y="1" width="4.6" height="1.1" fill="#5a1c08"/><rect x="13" y="0" width="5.6" height="3" fill="#e58a4a"/><rect x="13.5" y="1" width="4.6" height="1.1" fill="#5a1c08"/><rect x="19.5" y="0" width="5.6" height="3" fill="#e58a4a"/><rect x="20" y="1" width="4.6" height="1.1" fill="#5a1c08"/><rect x="26" y="0" width="5.6" height="3" fill="#e58a4a"/><rect x="26.5" y="1" width="4.6" height="1.1" fill="#5a1c08"/><rect x="0" y="3.5" width="5.6" height="3" fill="#fbeec2"/><rect x="0.5" y="4.5" width="4.6" height="1.1" fill="#a07a34"/><rect x="6.5" y="3.5" width="5.6" height="3" fill="#fbeec2"/><rect x="7" y="4.5" width="4.6" height="1.1" fill="#a07a34"/><rect x="13" y="3.5" width="5.6" height="3" fill="#fbeec2"/><rect x="13.5" y="4.5" width="4.6" height="1.1" fill="#a07a34"/><rect x="19.5" y="3.5" width="5.6" height="3" fill="#fbeec2"/><rect x="20" y="4.5" width="4.6" height="1.1" fill="#a07a34"/><rect x="26" y="3.5" width="5.6" height="3" fill="#fbeec2"/><rect x="26.5" y="4.5" width="4.6" height="1.1" fill="#a07a34"/><rect x="0" y="7" width="5.6" height="3" fill="#e9bd7c"/><rect x="0.5" y="8" width="4.6" height="1.1" fill="#7a3a10"/><rect x="6.5" y="7" width="5.6" height="3" fill="#e9bd7c"/><rect x="7" y="8" width="4.6" height="1.1" fill="#7a3a10"/><rect x="13" y="7" width="5.6" height="3" fill="#e9bd7c"/><rect x="13.5" y="8" width="4.6" height="1.1" fill="#7a3a10"/><rect x="19.5" y="7" width="5.6" height="3" fill="#e9bd7c"/><rect x="20" y="8" width="4.6" height="1.1" fill="#7a3a10"/><rect x="26" y="7" width="5.6" height="3" fill="#e9bd7c"/><rect x="26.5" y="8" width="4.6" height="1.1" fill="#7a3a10"/><rect x="0" y="10.5" width="5.6" height="3" fill="#fbeec2"/><rect x="0.5" y="11.5" width="4.6" height="1.1" fill="#a07a34"/><rect x="6.5" y="10.5" width="5.6" height="3" fill="#fbeec2"/><rect x="7" y="11.5" width="4.6" height="1.1" fill="#a07a34"/><rect x="13" y="10.5" width="5.6" height="3" fill="#fbeec2"/><rect x="13.5" y="11.5" width="4.6" height="1.1" fill="#a07a34"/><rect x="19.5" y="10.5" width="5.6" height="3" fill="#fbeec2"/><rect x="20" y="11.5" width="4.6" height="1.1" fill="#a07a34"/><rect x="26" y="10.5" width="5.6" height="3" fill="#fbeec2"/><rect x="26.5" y="11.5" width="4.6" height="1.1" fill="#a07a34"/><rect x="0" y="14" width="5.6" height="3" fill="#e9bd7c"/><rect x="0.5" y="15" width="4.6" height="1.1" fill="#2a1a08"/><rect x="6.5" y="14" width="5.6" height="3" fill="#e9bd7c"/><rect x="7" y="15" width="4.6" height="1.1" fill="#2a1a08"/><rect x="13" y="14" width="5.6" height="3" fill="#e9bd7c"/><rect x="13.5" y="15" width="4.6" height="1.1" fill="#2a1a08"/><rect x="19.5" y="14" width="5.6" height="3" fill="#e9bd7c"/><rect x="20" y="15" width="4.6" height="1.1" fill="#2a1a08"/><rect x="26" y="14" width="5.6" height="3" fill="#e9bd7c"/><rect x="26.5" y="15" width="4.6" height="1.1" fill="#2a1a08"/></svg>
<svg class="a" style="left:543.4px;top:209px;" width="32" height="17.5" viewBox="0 0 32 17.5"><rect x="0" y="0" width="5.6" height="3" fill="#5a7a14"/><rect x="0.5" y="1" width="4.6" height="1.1" fill="#1a2c04"/><rect x="6.5" y="0" width="5.6" height="3" fill="#5a7a14"/><rect x="7" y="1" width="4.6" height="1.1" fill="#1a2c04"/><rect x="13" y="0" width="5.6" height="3" fill="#5a7a14"/><rect x="13.5" y="1" width="4.6" height="1.1" fill="#1a2c04"/><rect x="19.5" y="0" width="5.6" height="3" fill="#5a7a14"/><rect x="20" y="1" width="4.6" height="1.1" fill="#1a2c04"/><rect x="26" y="0" width="5.6" height="3" fill="#5a7a14"/><rect x="26.5" y="1" width="4.6" height="1.1" fill="#1a2c04"/><rect x="0" y="3.5" width="5.6" height="3" fill="#a4c63a"/><rect x="0.5" y="4.5" width="4.6" height="1.1" fill="#1a2c04"/><rect x="6.5" y="3.5" width="5.6" height="3" fill="#a4c63a"/><rect x="7" y="4.5" width="4.6" height="1.1" fill="#1a2c04"/><rect x="13" y="3.5" width="5.6" height="3" fill="#a4c63a"/><rect x="13.5" y="4.5" width="4.6" height="1.1" fill="#1a2c04"/><rect x="19.5" y="3.5" width="5.6" height="3" fill="#a4c63a"/><rect x="20" y="4.5" width="4.6" height="1.1" fill="#1a2c04"/><rect x="26" y="3.5" width="5.6" height="3" fill="#a4c63a"/><rect x="26.5" y="4.5" width="4.6" height="1.1" fill="#1a2c04"/><rect x="0" y="7" width="5.6" height="3" fill="#86aa20"/><rect x="0.5" y="8" width="4.6" height="1.1" fill="#1a2c04"/><rect x="6.5" y="7" width="5.6" height="3" fill="#86aa20"/><rect x="7" y="8" width="4.6" height="1.1" fill="#1a2c04"/><rect x="13" y="7" width="5.6" height="3" fill="#86aa20"/><rect x="13.5" y="8" width="4.6" height="1.1" fill="#1a2c04"/><rect x="19.5" y="7" width="5.6" height="3" fill="#86aa20"/><rect x="20" y="8" width="4.6" height="1.1" fill="#1a2c04"/><rect x="26" y="7" width="5.6" height="3" fill="#86aa20"/><rect x="26.5" y="8" width="4.6" height="1.1" fill="#1a2c04"/><rect x="0" y="10.5" width="5.6" height="3" fill="#cbe578"/><rect x="0.5" y="11.5" width="4.6" height="1.1" fill="#1a2c04"/><rect x="6.5" y="10.5" width="5.6" height="3" fill="#cbe578"/><rect x="7" y="11.5" width="4.6" height="1.1" fill="#1a2c04"/><rect x="13" y="10.5" width="5.6" height="3" fill="#cbe578"/><rect x="13.5" y="11.5" width="4.6" height="1.1" fill="#1a2c04"/><rect x="19.5" y="10.5" width="5.6" height="3" fill="#cbe578"/><rect x="20" y="11.5" width="4.6" height="1.1" fill="#1a2c04"/><rect x="26" y="10.5" width="5.6" height="3" fill="#cbe578"/><rect x="26.5" y="11.5" width="4.6" height="1.1" fill="#1a2c04"/><rect x="0" y="14" width="5.6" height="3" fill="#86aa20"/><rect x="0.5" y="15" width="4.6" height="1.1" fill="#1a2c04"/><rect x="6.5" y="14" width="5.6" height="3" fill="#86aa20"/><rect x="7" y="15" width="4.6" height="1.1" fill="#1a2c04"/><rect x="13" y="14" width="5.6" height="3" fill="#86aa20"/><rect x="13.5" y="15" width="4.6" height="1.1" fill="#1a2c04"/><rect x="19.5" y="14" width="5.6" height="3" fill="#86aa20"/><rect x="20" y="15" width="4.6" height="1.1" fill="#1a2c04"/><rect x="26" y="14" width="5.6" height="3" fill="#86aa20"/><rect x="26.5" y="15" width="4.6" height="1.1" fill="#1a2c04"/></svg>
<svg class="a" style="left:498.3px;top:230.2px;" width="32" height="17.5" viewBox="0 0 32 17.5"><rect x="0" y="0" width="5.6" height="3" fill="#2a96aa"/><rect x="0.5" y="1" width="4.6" height="1.1" fill="#043a48"/><rect x="6.5" y="0" width="5.6" height="3" fill="#2a96aa"/><rect x="7" y="1" width="4.6" height="1.1" fill="#043a48"/><rect x="13" y="0" width="5.6" height="3" fill="#2a96aa"/><rect x="13.5" y="1" width="4.6" height="1.1" fill="#043a48"/><rect x="19.5" y="0" width="5.6" height="3" fill="#2a96aa"/><rect x="20" y="1" width="4.6" height="1.1" fill="#043a48"/><rect x="26" y="0" width="5.6" height="3" fill="#2a96aa"/><rect x="26.5" y="1" width="4.6" height="1.1" fill="#043a48"/><rect x="0" y="3.5" width="5.6" height="3" fill="#62d4d8"/><rect x="0.5" y="4.5" width="4.6" height="1.1" fill="#0a5a62"/><rect x="6.5" y="3.5" width="5.6" height="3" fill="#62d4d8"/><rect x="7" y="4.5" width="4.6" height="1.1" fill="#0a5a62"/><rect x="13" y="3.5" width="5.6" height="3" fill="#62d4d8"/><rect x="13.5" y="4.5" width="4.6" height="1.1" fill="#0a5a62"/><rect x="19.5" y="3.5" width="5.6" height="3" fill="#62d4d8"/><rect x="20" y="4.5" width="4.6" height="1.1" fill="#0a5a62"/><rect x="26" y="3.5" width="5.6" height="3" fill="#62d4d8"/><rect x="26.5" y="4.5" width="4.6" height="1.1" fill="#0a5a62"/><rect x="0.5" y="8" width="4.6" height="1.1" fill="#2a3a3c"/><rect x="7" y="8" width="4.6" height="1.1" fill="#2a3a3c"/><rect x="13.5" y="8" width="4.6" height="1.1" fill="#2a3a3c"/><rect x="20" y="8" width="4.6" height="1.1" fill="#2a3a3c"/><rect x="26.5" y="8" width="4.6" height="1.1" fill="#2a3a3c"/><rect x="0" y="10.5" width="5.6" height="3" fill="#3fb6c6"/><rect x="0.5" y="11.5" width="4.6" height="1.1" fill="#0a4a5a"/><rect x="6.5" y="10.5" width="5.6" height="3" fill="#3fb6c6"/><rect x="7" y="11.5" width="4.6" height="1.1" fill="#0a4a5a"/><rect x="13" y="10.5" width="5.6" height="3" fill="#3fb6c6"/><rect x="13.5" y="11.5" width="4.6" height="1.1" fill="#0a4a5a"/><rect x="19.5" y="10.5" width="5.6" height="3" fill="#3fb6c6"/><rect x="20" y="11.5" width="4.6" height="1.1" fill="#0a4a5a"/><rect x="26" y="10.5" width="5.6" height="3" fill="#3fb6c6"/><rect x="26.5" y="11.5" width="4.6" height="1.1" fill="#0a4a5a"/><rect x="0.5" y="15" width="4.6" height="1.1" fill="#2a3a3c"/><rect x="7" y="15" width="4.6" height="1.1" fill="#2a3a3c"/><rect x="13.5" y="15" width="4.6" height="1.1" fill="#2a3a3c"/><rect x="20" y="15" width="4.6" height="1.1" fill="#2a3a3c"/><rect x="26.5" y="15" width="4.6" height="1.1" fill="#2a3a3c"/></svg>
<svg class="a" style="left:543.4px;top:230.2px;" width="32" height="17.5" viewBox="0 0 32 17.5"><rect x="0" y="0" width="5.6" height="3" fill="#6468b0"/><rect x="0.5" y="1" width="4.6" height="1.1" fill="#14163c"/><rect x="6.5" y="0" width="5.6" height="3" fill="#6468b0"/><rect x="7" y="1" width="4.6" height="1.1" fill="#14163c"/><rect x="13" y="0" width="5.6" height="3" fill="#6468b0"/><rect x="13.5" y="1" width="4.6" height="1.1" fill="#14163c"/><rect x="19.5" y="0" width="5.6" height="3" fill="#6468b0"/><rect x="20" y="1" width="4.6" height="1.1" fill="#14163c"/><rect x="26" y="0" width="5.6" height="3" fill="#6468b0"/><rect x="26.5" y="1" width="4.6" height="1.1" fill="#14163c"/><rect x="0" y="3.5" width="5.6" height="3" fill="#dedff0"/><rect x="0.5" y="4.5" width="4.6" height="1.1" fill="#4a4a5c"/><rect x="6.5" y="3.5" width="5.6" height="3" fill="#dedff0"/><rect x="7" y="4.5" width="4.6" height="1.1" fill="#4a4a5c"/><rect x="13" y="3.5" width="5.6" height="3" fill="#dedff0"/><rect x="13.5" y="4.5" width="4.6" height="1.1" fill="#4a4a5c"/><rect x="19.5" y="3.5" width="5.6" height="3" fill="#dedff0"/><rect x="20" y="4.5" width="4.6" height="1.1" fill="#4a4a5c"/><rect x="26" y="3.5" width="5.6" height="3" fill="#dedff0"/><rect x="26.5" y="4.5" width="4.6" height="1.1" fill="#4a4a5c"/><rect x="0.5" y="8" width="4.6" height="1.1" fill="#4a4a5c"/><rect x="7" y="8" width="4.6" height="1.1" fill="#4a4a5c"/><rect x="13.5" y="8" width="4.6" height="1.1" fill="#4a4a5c"/><rect x="20" y="8" width="4.6" height="1.1" fill="#4a4a5c"/><rect x="26.5" y="8" width="4.6" height="1.1" fill="#4a4a5c"/><rect x="0" y="10.5" width="5.6" height="3" fill="#dedff0"/><rect x="0.5" y="11.5" width="4.6" height="1.1" fill="#4a4a5c"/><rect x="6.5" y="10.5" width="5.6" height="3" fill="#dedff0"/><rect x="7" y="11.5" width="4.6" height="1.1" fill="#4a4a5c"/><rect x="13" y="10.5" width="5.6" height="3" fill="#dedff0"/><rect x="13.5" y="11.5" width="4.6" height="1.1" fill="#4a4a5c"/><rect x="19.5" y="10.5" width="5.6" height="3" fill="#dedff0"/><rect x="20" y="11.5" width="4.6" height="1.1" fill="#4a4a5c"/><rect x="26" y="10.5" width="5.6" height="3" fill="#dedff0"/><rect x="26.5" y="11.5" width="4.6" height="1.1" fill="#4a4a5c"/><rect x="0.5" y="15" width="4.6" height="1.1" fill="#3a3a4c"/><rect x="7" y="15" width="4.6" height="1.1" fill="#3a3a4c"/><rect x="13.5" y="15" width="4.6" height="1.1" fill="#3a3a4c"/><rect x="20" y="15" width="4.6" height="1.1" fill="#3a3a4c"/><rect x="26.5" y="15" width="4.6" height="1.1" fill="#3a3a4c"/></svg>
<svg class="a" style="left:498.3px;top:251.3px;" width="32" height="17.5" viewBox="0 0 32 17.5"><rect x="0" y="0" width="5.6" height="3" fill="#f3c678"/><rect x="0.5" y="1" width="4.6" height="1.1" fill="#5a3208"/><rect x="6.5" y="0" width="5.6" height="3" fill="#f3c678"/><rect x="7" y="1" width="4.6" height="1.1" fill="#5a3208"/><rect x="13" y="0" width="5.6" height="3" fill="#f3c678"/><rect x="13.5" y="1" width="4.6" height="1.1" fill="#5a3208"/><rect x="19.5" y="0" width="5.6" height="3" fill="#f3c678"/><rect x="20" y="1" width="4.6" height="1.1" fill="#5a3208"/><rect x="26" y="0" width="5.6" height="3" fill="#f3c678"/><rect x="26.5" y="1" width="4.6" height="1.1" fill="#5a3208"/><rect x="0" y="3.5" width="5.6" height="3" fill="#f6f2a4"/><rect x="0.5" y="4.5" width="4.6" height="1.1" fill="#5a5a1c"/><rect x="6.5" y="3.5" width="5.6" height="3" fill="#f6f2a4"/><rect x="7" y="4.5" width="4.6" height="1.1" fill="#5a5a1c"/><rect x="13" y="3.5" width="5.6" height="3" fill="#f6f2a4"/><rect x="13.5" y="4.5" width="4.6" height="1.1" fill="#5a5a1c"/><rect x="19.5" y="3.5" width="5.6" height="3" fill="#f6f2a4"/><rect x="20" y="4.5" width="4.6" height="1.1" fill="#5a5a1c"/><rect x="26" y="3.5" width="5.6" height="3" fill="#f6f2a4"/><rect x="26.5" y="4.5" width="4.6" height="1.1" fill="#5a5a1c"/><rect x="0" y="7" width="5.6" height="3" fill="#fbf8cc"/><rect x="0.5" y="8" width="4.6" height="1.1" fill="#5a5a1c"/><rect x="6.5" y="7" width="5.6" height="3" fill="#fbf8cc"/><rect x="7" y="8" width="4.6" height="1.1" fill="#5a5a1c"/><rect x="13" y="7" width="5.6" height="3" fill="#fbf8cc"/><rect x="13.5" y="8" width="4.6" height="1.1" fill="#5a5a1c"/><rect x="19.5" y="7" width="5.6" height="3" fill="#fbf8cc"/><rect x="20" y="8" width="4.6" height="1.1" fill="#5a5a1c"/><rect x="26" y="7" width="5.6" height="3" fill="#fbf8cc"/><rect x="26.5" y="8" width="4.6" height="1.1" fill="#5a5a1c"/><rect x="0" y="10.5" width="5.6" height="3" fill="#dde46a"/><rect x="0.5" y="11.5" width="4.6" height="1.1" fill="#4a5210"/><rect x="6.5" y="10.5" width="5.6" height="3" fill="#dde46a"/><rect x="7" y="11.5" width="4.6" height="1.1" fill="#4a5210"/><rect x="13" y="10.5" width="5.6" height="3" fill="#dde46a"/><rect x="13.5" y="11.5" width="4.6" height="1.1" fill="#4a5210"/><rect x="19.5" y="10.5" width="5.6" height="3" fill="#dde46a"/><rect x="20" y="11.5" width="4.6" height="1.1" fill="#4a5210"/><rect x="26" y="10.5" width="5.6" height="3" fill="#dde46a"/><rect x="26.5" y="11.5" width="4.6" height="1.1" fill="#4a5210"/><rect x="0" y="14" width="5.6" height="3" fill="#fbf8cc"/><rect x="0.5" y="15" width="4.6" height="1.1" fill="#3a3a1c"/><rect x="6.5" y="14" width="5.6" height="3" fill="#fbf8cc"/><rect x="7" y="15" width="4.6" height="1.1" fill="#3a3a1c"/><rect x="13" y="14" width="5.6" height="3" fill="#fbf8cc"/><rect x="13.5" y="15" width="4.6" height="1.1" fill="#3a3a1c"/><rect x="19.5" y="14" width="5.6" height="3" fill="#fbf8cc"/><rect x="20" y="15" width="4.6" height="1.1" fill="#3a3a1c"/><rect x="26" y="14" width="5.6" height="3" fill="#fbf8cc"/><rect x="26.5" y="15" width="4.6" height="1.1" fill="#3a3a1c"/></svg>
<span class="t" style="left:488px;top:274.05px;height:11.1px;font-size:7.1px;color:#08080c;"><span class="c">顯示</span></span>
<div style="left:504px;top:280px;width:89px;height:0.8px;background:#9d9dad"></div>
<div style="left:491.5px;top:288.6px;width:6.8px;height:6.8px;background:#fdfdfb;border:1px solid #d2d4c8"></div>
<svg class="a" style="left:492.3px;top:289.2px;" width="5.4" height="5.4" viewBox="0 0 5.4 5.4"><path d="M1 2.8L2.3 4.2L4.6 1.2" fill="none" stroke="#a9ad9c" stroke-width="0.9"/></svg>
<span class="t" style="left:501.6px;top:286.5px;height:11px;font-size:7px;color:#85858f;"><span class="c">標題列</span></span>
<div style="left:491.5px;top:301.9px;width:6.8px;height:6.8px;background:#fdfdfb;border:1px solid #d2d4c8"></div>
<span class="t" style="left:501.6px;top:299.8px;height:11px;font-size:7px;color:#85858f;"><span class="c">總計列數</span></span>
<div style="left:491.5px;top:315.2px;width:6.8px;height:6.8px;background:#fdfdfb;border:1px solid #d2d4c8"></div>
<svg class="a" style="left:492.3px;top:315.8px;" width="5.4" height="5.4" viewBox="0 0 5.4 5.4"><path d="M1 2.8L2.3 4.2L4.6 1.2" fill="none" stroke="#a9ad9c" stroke-width="0.9"/></svg>
<span class="t" style="left:501.6px;top:313.1px;height:11px;font-size:7px;color:#85858f;"><span class="c">節區式的列</span></span>
<div style="left:491.5px;top:328.5px;width:6.8px;height:6.8px;background:#fdfdfb;border:1px solid #d2d4c8"></div>
<span class="t" style="left:501.6px;top:326.4px;height:11px;font-size:7px;color:#85858f;"><span class="c">第一欄</span></span>
<div style="left:491.5px;top:341.8px;width:6.8px;height:6.8px;background:#fdfdfb;border:1px solid #d2d4c8"></div>
<span class="t" style="left:501.6px;top:339.7px;height:11px;font-size:7px;color:#85858f;"><span class="c">最後一欄</span></span>
<div style="left:491.5px;top:355.1px;width:6.8px;height:6.8px;background:#fdfdfb;border:1px solid #d2d4c8"></div>
<span class="t" style="left:501.6px;top:353px;height:11px;font-size:7px;color:#85858f;"><span class="c">節區式的欄</span></span>
<div style="left:485px;top:367px;width:111.4px;height:13.6px;background:#e3e2ea;border-top:1px solid #f6f6fa;border-bottom:1px solid #b9b9c8"></div>
<svg class="a" style="left:487px;top:370.8px;" width="5" height="6" viewBox="0 0 5 6"><path d="M0.8 0.6V5.4L4.2 3Z" fill="#eceff5" stroke="#4a5670" stroke-width="0.8"/></svg>
<span class="t" style="left:494px;top:368.15px;height:11.3px;font-size:7.3px;color:#101018;"><span class="cb">自訂動畫</span></span>
<div style="left:485px;top:381px;width:111.4px;height:14.6px;background:#e3e2ea;border-top:1px solid #f6f6fa;border-bottom:1px solid #b9b9c8"></div>
<svg class="a" style="left:487px;top:385.3px;" width="5" height="6" viewBox="0 0 5 6"><path d="M0.8 0.6V5.4L4.2 3Z" fill="#eceff5" stroke="#4a5670" stroke-width="0.8"/></svg>
<span class="t" style="left:494px;top:382.65px;height:11.3px;font-size:7.3px;color:#101018;"><span class="cb">投影片切換</span></span>
<div style="left:0px;top:398px;width:600px;height:19.5px;background:#e4e4ee;border-top:1px solid #d4d4de"></div>
<div style="left:0px;top:399px;width:482px;height:17.8px;background:linear-gradient(#f6f6fa,#f0f0f6 60%,#eaeaf2);border-radius:1px"></div>
<div style="left:0px;top:417px;width:600px;height:16px;background:linear-gradient(#e6e6ef,#dfdfe9 80%,#ececf2 86%,#d8d8e4);border-top:1px solid #c2c2d0"></div>
<svg class="a" style="left:2px;top:33px;" width="2" height="14" viewBox="0 0 2 14"><rect x="0" y="0" width="1.1" height="1.1" fill="#9a9aae"/><rect x="0" y="2.6" width="1.1" height="1.1" fill="#9a9aae"/><rect x="0" y="5.2" width="1.1" height="1.1" fill="#9a9aae"/><rect x="0" y="7.8" width="1.1" height="1.1" fill="#9a9aae"/><rect x="0" y="10.4" width="1.1" height="1.1" fill="#9a9aae"/></svg>
<svg class="a" style="left:8.5px;top:33.2px;" width="10" height="10" viewBox="0 0 10 10"><rect x="0.6" y="1" width="8" height="8.4" fill="#fbfcff" stroke="#7c88a6" stroke-width="0.7"/><rect x="0.9" y="1.3" width="7.4" height="2" fill="#3a66b8"/><rect x="1.8" y="4.4" width="1.8" height="3.8" fill="#4a74c0"/><rect x="4.4" y="4.4" width="1.8" height="3.8" fill="#4a74c0"/><path d="M6.3 8.8L9.4 5.4" stroke="#6a6a5a" stroke-width="1.1"/></svg>
<svg class="a" style="left:22.8px;top:37.4px;" width="3.6" height="2.6" viewBox="0 0 3.6 2.6"><path d="M0 0.2H3.6L1.8 2.5Z" fill="#1a1a24"/></svg>
<svg class="a" style="left:31px;top:32.8px;" width="10.5" height="9.5" viewBox="0 0 10.5 9.5"><path d="M0.5 2.2H3.6L4.4 3.2H9V8.8H0.5Z" fill="#eebf3e" stroke="#a0701c" stroke-width="0.7"/><path d="M0.6 8.6L2.2 4.6H10L8.6 8.6Z" fill="#f7d768" stroke="#a0701c" stroke-width="0.6"/><path d="M5.4 0.4H9.6V4.2L8 3L6.4 5L5 3.8L6.8 2Z" fill="#d84a22"/></svg>
<svg class="a" style="left:45.8px;top:33.4px;" width="9.6" height="9.4" viewBox="0 0 9.6 9.4"><rect x="0.4" y="0.4" width="8.8" height="8.6" rx="0.8" fill="#27407c" stroke="#16264e" stroke-width="0.6"/><rect x="1.8" y="0.9" width="6" height="3.4" fill="#c9d8ee"/><rect x="2.6" y="5.8" width="4.4" height="3" fill="#8ea4cc"/><rect x="3.3" y="6.4" width="1.2" height="1.9" fill="#16264e"/></svg>
<svg class="a" style="left:59.8px;top:35.6px;" width="10.6" height="6.8" viewBox="0 0 10.6 6.8"><rect x="0.4" y="0.6" width="7.6" height="5" fill="#eef0f6" stroke="#8a8ea6" stroke-width="0.7"/><path d="M0.6 0.8L4.2 3.6L7.8 0.8" fill="none" stroke="#8a8ea6" stroke-width="0.6"/><path d="M6 3.2H8.2V1.8L10.4 4L8.2 6.2V4.8H6Z" fill="#e6b44a" stroke="#8a6a20" stroke-width="0.5"/></svg>
<div style="left:74px;top:32.5px;width:1px;height:13px;background:#d6d6e0"></div>
<div style="left:75px;top:32.5px;width:1px;height:13px;background:#fbfbfd"></div>
<svg class="a" style="left:79px;top:33.4px;" width="10" height="9.4" viewBox="0 0 10 9.4"><rect x="0.5" y="1.2" width="7.4" height="7.6" fill="#eeeef4" stroke="#c2c2d0" stroke-width="0.7"/><path d="M2 3.4H6.4M2 5H6.4M2 6.6H5" stroke="#d0d0dc" stroke-width="0.6"/><path d="M4.2 7L8.8 1.8L9.6 2.6L5.2 7.8Z" fill="#d4d4e0" stroke="#bcbccc" stroke-width="0.4"/></svg>
<div style="left:93px;top:32.5px;width:1px;height:13px;background:#d6d6e0"></div>
<div style="left:94px;top:32.5px;width:1px;height:13px;background:#fbfbfd"></div>
<svg class="a" style="left:98.8px;top:33.2px;" width="9.6" height="10" viewBox="0 0 9.6 10"><path d="M0.8 0.5H6L8.6 3V9.5H0.8Z" fill="#fdfdfe" stroke="#8a8ea6" stroke-width="0.7"/><rect x="0.4" y="5" width="8.4" height="4" fill="#d63a3e"/><path d="M1.8 8.2V5.8M4.2 8.2V5.8M6.6 8.2V5.8" stroke="#fbe4e4" stroke-width="0.9"/></svg>
<svg class="a" style="left:113.6px;top:33.6px;" width="10" height="9.4" viewBox="0 0 10 9.4"><rect x="2.2" y="0.5" width="5.4" height="3.4" fill="#fdfdfe" stroke="#80849a" stroke-width="0.6"/><rect x="0.5" y="3.6" width="9" height="4" rx="0.6" fill="#7c8298" stroke="#3c4258" stroke-width="0.7"/><rect x="1.8" y="6.4" width="6.4" height="2.4" fill="#f2f3f8" stroke="#5c6074" stroke-width="0.6"/></svg>
<div style="left:128px;top:32.5px;width:1px;height:13px;background:#d6d6e0"></div>
<div style="left:129px;top:32.5px;width:1px;height:13px;background:#fbfbfd"></div>
<span class="t" style="left:133px;top:32.6px;height:5px;font:bold 4.6px 'Liberation Sans',sans-serif;color:#2a3050;letter-spacing:-0.1px">ABC</span>
<svg class="a" style="left:134px;top:37px;" width="8" height="6" viewBox="0 0 8 6"><path d="M0.8 2.2L3 4.8L7 0.8" fill="none" stroke="#2a62c4" stroke-width="1.5"/></svg>
<div style="left:145.2px;top:30.8px;width:14px;height:15.4px;background:#fafaff;border:1px solid #9aa0c0;border-radius:1px"></div>
<span class="t" style="left:147.3px;top:33.4px;height:5px;font:bold 4.6px 'Liberation Sans',sans-serif;color:#2a3050;letter-spacing:-0.1px">ABC</span>
<svg class="a" style="left:147px;top:39px;" width="10.4" height="4" viewBox="0 0 10.4 4"><path d="M0.4 2.6Q1.7 0.2 3 2T5.6 2T8.2 2T10 1.4" fill="none" stroke="#d8222a" stroke-width="1.3"/></svg>
<div style="left:162px;top:32.5px;width:1px;height:13px;background:#d6d6e0"></div>
<div style="left:163px;top:32.5px;width:1px;height:13px;background:#fbfbfd"></div>
<svg class="a" style="left:166.6px;top:33.6px;" width="9.4" height="9.4" viewBox="0 0 9.4 9.4"><path d="M1.4 1L7.6 8M7.6 1L1.4 8" stroke="#cfcfdb" stroke-width="1.5"/><circle cx="2" cy="7.6" r="1.2" fill="none" stroke="#d2d2de" stroke-width="0.8"/><circle cx="7" cy="7.6" r="1.2" fill="none" stroke="#d2d2de" stroke-width="0.8"/></svg>
<svg class="a" style="left:181.6px;top:33.6px;" width="9.6" height="9.6" viewBox="0 0 9.6 9.6"><rect x="0.6" y="0.6" width="5" height="6" fill="#e9e9f1" stroke="#cacad8" stroke-width="0.7"/><rect x="3.6" y="3" width="5" height="6" fill="#ececf3" stroke="#cacad8" stroke-width="0.7"/></svg>
<svg class="a" style="left:196px;top:33px;" width="10.4" height="10.4" viewBox="0 0 10.4 10.4"><rect x="0.6" y="1.4" width="7.6" height="8.2" rx="0.6" fill="#d9a93a" stroke="#8a6418" stroke-width="0.7"/><rect x="2.6" y="0.4" width="3.6" height="2" fill="#8a8a92" stroke="#55555e" stroke-width="0.4"/><rect x="4" y="4" width="5.8" height="5.8" fill="#e8f0fb" stroke="#4e6ea8" stroke-width="0.7"/><path d="M5 5.6H8.8M5 7H8.8M5 8.4H7.6" stroke="#6a8ac4" stroke-width="0.5"/></svg>
<svg class="a" style="left:211.6px;top:33.6px;" width="9.6" height="9.6" viewBox="0 0 9.6 9.6"><path d="M8.6 0.8L4.4 5.2L5.6 6.2L9.2 1.6Z" fill="#dadae4" stroke="#c6c6d4" stroke-width="0.4"/><path d="M4.4 5L1 6.4L1.6 9L5.8 6.4Z" fill="#d2d2de" stroke="#c2c2d0" stroke-width="0.4"/></svg>
<div style="left:225px;top:32.5px;width:1px;height:13px;background:#d6d6e0"></div>
<div style="left:226px;top:32.5px;width:1px;height:13px;background:#fbfbfd"></div>
<svg class="a" style="left:229px;top:34px;" width="10" height="9" viewBox="0 0 10 9"><path d="M1 3.6L4.4 0.8V2.6C8 2.4 9.4 4.6 8.6 8C8 5.8 6.6 5 4.4 5.2V6.8Z" fill="#d9d9e3" stroke="#c4c4d2" stroke-width="0.5"/></svg>
<svg class="a" style="left:242.8px;top:37.6px;" width="3.6" height="2.6" viewBox="0 0 3.6 2.6"><path d="M0 0.2H3.6L1.8 2.5Z" fill="#9a9aac"/></svg>
<svg class="a" style="left:251.8px;top:34px;" width="10" height="9" viewBox="0 0 10 9"><path d="M9 3.6L5.6 0.8V2.6C2 2.4 0.6 4.6 1.4 8C2 5.8 3.4 5 5.6 5.2V6.8Z" fill="#d9d9e3" stroke="#c4c4d2" stroke-width="0.5"/></svg>
<svg class="a" style="left:265.2px;top:37.6px;" width="3.6" height="2.6" viewBox="0 0 3.6 2.6"><path d="M0 0.2H3.6L1.8 2.5Z" fill="#9a9aac"/></svg>
<div style="left:273px;top:32.5px;width:1px;height:13px;background:#d6d6e0"></div>
<div style="left:274px;top:32.5px;width:1px;height:13px;background:#fbfbfd"></div>
<svg class="a" style="left:278px;top:33px;" width="10" height="10.4" viewBox="0 0 10 10.4"><path d="M0.6 0.6V9.8H9.6" fill="none" stroke="#4a4a5a" stroke-width="0.7"/><rect x="1.6" y="4.4" width="2.2" height="5" fill="#d83a2a"/><rect x="4.2" y="1.6" width="2.2" height="7.8" fill="#e8a22a"/><rect x="4.2" y="1.6" width="2.2" height="2.6" fill="#d83a2a"/><rect x="6.8" y="5.4" width="2.2" height="4" fill="#3a62b8"/><rect x="4.2" y="6.6" width="2.2" height="2.8" fill="#3c9a4a"/></svg>
<svg class="a" style="left:292.4px;top:34px;" width="9.6" height="8.6" viewBox="0 0 9.6 8.6"><rect x="0.4" y="0.4" width="8.8" height="7.8" fill="#f4f7fc" stroke="#6a7ea8" stroke-width="0.7"/><rect x="0.7" y="0.7" width="8.2" height="1.8" fill="#a8bce0"/><path d="M0.4 2.8H9.2M0.4 4.6H9.2M0.4 6.4H9.2M3.3 0.4V8.2M6.3 0.4V8.2" stroke="#7c90ba" stroke-width="0.5"/></svg>
<svg class="a" style="left:305.8px;top:37.6px;" width="3.6" height="2.6" viewBox="0 0 3.6 2.6"><path d="M0 0.2H3.6L1.8 2.5Z" fill="#1a1a24"/></svg>
<svg class="a" style="left:314.6px;top:33.4px;" width="10" height="10" viewBox="0 0 10 10"><circle cx="5" cy="5" r="4.4" fill="#58a868" stroke="#2c6a3c" stroke-width="0.7"/><path d="M2 6.8V4.2L5 2.2L8 4.2V6.8H6V5H4V6.8Z" fill="#e8f4ea" stroke="#2c5a34" stroke-width="0.5"/><path d="M3 8.2H7" stroke="#fdfdfd" stroke-width="0.8"/></svg>
<div style="left:329px;top:32.5px;width:1px;height:13px;background:#d6d6e0"></div>
<div style="left:330px;top:32.5px;width:1px;height:13px;background:#fbfbfd"></div>
<svg class="a" style="left:333.4px;top:33.6px;" width="10.6" height="10" viewBox="0 0 10.6 10"><rect x="0.2" y="0.2" width="0.9" height="0.9" fill="#a4a4b8"/><rect x="0.2" y="2.5" width="0.9" height="0.9" fill="#a4a4b8"/><rect x="0.2" y="4.8" width="0.9" height="0.9" fill="#a4a4b8"/><rect x="0.2" y="7.1" width="0.9" height="0.9" fill="#a4a4b8"/><rect x="0.2" y="9.4" width="0.9" height="0.9" fill="#a4a4b8"/><rect x="2.6" y="0.2" width="0.9" height="0.9" fill="#a4a4b8"/><rect x="2.6" y="2.5" width="0.9" height="0.9" fill="#a4a4b8"/><rect x="2.6" y="4.8" width="0.9" height="0.9" fill="#a4a4b8"/><rect x="2.6" y="7.1" width="0.9" height="0.9" fill="#a4a4b8"/><rect x="2.6" y="9.4" width="0.9" height="0.9" fill="#a4a4b8"/><rect x="5" y="0.2" width="0.9" height="0.9" fill="#a4a4b8"/><rect x="5" y="2.5" width="0.9" height="0.9" fill="#a4a4b8"/><rect x="5" y="4.8" width="0.9" height="0.9" fill="#a4a4b8"/><rect x="5" y="7.1" width="0.9" height="0.9" fill="#a4a4b8"/><rect x="5" y="9.4" width="0.9" height="0.9" fill="#a4a4b8"/><rect x="7.4" y="0.2" width="0.9" height="0.9" fill="#a4a4b8"/><rect x="7.4" y="2.5" width="0.9" height="0.9" fill="#a4a4b8"/><rect x="7.4" y="4.8" width="0.9" height="0.9" fill="#a4a4b8"/><rect x="7.4" y="7.1" width="0.9" height="0.9" fill="#a4a4b8"/><rect x="7.4" y="9.4" width="0.9" height="0.9" fill="#a4a4b8"/><rect x="9.8" y="0.2" width="0.9" height="0.9" fill="#a4a4b8"/><rect x="9.8" y="2.5" width="0.9" height="0.9" fill="#a4a4b8"/><rect x="9.8" y="4.8" width="0.9" height="0.9" fill="#a4a4b8"/><rect x="9.8" y="7.1" width="0.9" height="0.9" fill="#a4a4b8"/><rect x="9.8" y="9.4" width="0.9" height="0.9" fill="#a4a4b8"/></svg>
<div style="left:348px;top:32.5px;width:1px;height:13px;background:#d6d6e0"></div>
<div style="left:349px;top:32.5px;width:1px;height:13px;background:#fbfbfd"></div>
<svg class="a" style="left:353px;top:33.6px;" width="9.8" height="9.8" viewBox="0 0 9.8 9.8"><circle cx="4.9" cy="4.9" r="4.2" fill="#f6f6fa" stroke="#54365c" stroke-width="1"/><path d="M7.4 2.2L5.6 5.6L2.4 7.6L4.2 4.2Z" fill="#c42a3a"/><path d="M2.4 7.6L4.2 4.2L5.6 5.6Z" fill="#2a3a8a"/></svg>
<svg class="a" style="left:366.6px;top:33.2px;" width="11" height="10.6" viewBox="0 0 11 10.6"><path d="M0.6 2.4H5.4V9.8H0.6Z" fill="#f4f5fa" stroke="#8088a2" stroke-width="0.7"/><circle cx="6" cy="3.6" r="2.7" fill="#eef6fb" stroke="#55607c" stroke-width="0.9"/><path d="M7.8 5.6L10.2 8.4" stroke="#b89a2a" stroke-width="1.6" stroke-linecap="round"/></svg>
<svg class="a" style="left:381px;top:37.6px;" width="3.6" height="2.6" viewBox="0 0 3.6 2.6"><path d="M0 0.2H3.6L1.8 2.5Z" fill="#1a1a24"/></svg>
<div style="left:388px;top:32.5px;width:1px;height:13px;background:#d6d6e0"></div>
<div style="left:389px;top:32.5px;width:1px;height:13px;background:#fbfbfd"></div>
<svg class="a" style="left:394px;top:33.2px;" width="10.6" height="10.6" viewBox="0 0 10.6 10.6"><circle cx="5.3" cy="5.3" r="4.8" fill="#2448a8" stroke="#16306e" stroke-width="0.7"/><circle cx="5.3" cy="4.6" r="3.4" fill="#3a6ad0" opacity="0.7"/></svg>
<span class="t" style="left:397.2px;top:33.8px;height:9px;font:bold 8px 'Liberation Sans',sans-serif;color:#fff">?</span>
<div style="left:410px;top:30.5px;width:6px;height:16px;background:linear-gradient(#f1f0f7,#bebdd0);border-radius:1px"></div>
<svg class="a" style="left:411px;top:41px;" width="4" height="4" viewBox="0 0 4 4"><path d="M0.3 0.3H3.7V1H0.3ZM0.3 1.6H3.7L2 3.6Z" fill="#15151c"/></svg>
<svg class="a" style="left:420px;top:33px;" width="2" height="14" viewBox="0 0 2 14"><rect x="0" y="0" width="1.1" height="1.1" fill="#9a9aae"/><rect x="0" y="2.6" width="1.1" height="1.1" fill="#9a9aae"/><rect x="0" y="5.2" width="1.1" height="1.1" fill="#9a9aae"/><rect x="0" y="7.8" width="1.1" height="1.1" fill="#9a9aae"/><rect x="0" y="10.4" width="1.1" height="1.1" fill="#9a9aae"/></svg>
<svg class="a" style="left:426px;top:33.4px;" width="10.4" height="10" viewBox="0 0 10.4 10"><rect x="0.5" y="1.6" width="9" height="7.6" fill="#eef1ee" stroke="#7a8e86" stroke-width="0.7"/><rect x="1.4" y="5.2" width="3.2" height="3" fill="#f8faf8" stroke="#8aa092" stroke-width="0.4"/><rect x="5.6" y="5" width="3" height="3.2" fill="#6aa85e" stroke="#3c6e38" stroke-width="0.5"/><rect x="2.4" y="0.2" width="3" height="3" rx="1" fill="#5aa04e" stroke="#2e6a2c" stroke-width="0.5"/></svg>
<svg class="a" style="left:440.2px;top:37.6px;" width="3.6" height="2.6" viewBox="0 0 3.6 2.6"><path d="M0 0.2H3.6L1.8 2.5Z" fill="#1a1a24"/></svg>
<svg class="a" style="left:447.4px;top:33.4px;" width="10.4" height="10" viewBox="0 0 10.4 10"><rect x="0.5" y="1.6" width="9" height="7.6" fill="#eef1ee" stroke="#7a8e86" stroke-width="0.7"/><rect x="1.4" y="5.2" width="3.2" height="3" fill="#f8faf8" stroke="#8aa092" stroke-width="0.4"/><rect x="5.6" y="5" width="3" height="3.2" fill="#6aa85e" stroke="#3c6e38" stroke-width="0.5"/><rect x="1.4" y="2.6" width="7.2" height="1.4" fill="#c2cedc"/></svg>
<svg class="a" style="left:461.8px;top:37.6px;" width="3.6" height="2.6" viewBox="0 0 3.6 2.6"><path d="M0 0.2H3.6L1.8 2.5Z" fill="#1a1a24"/></svg>
<svg class="a" style="left:469.8px;top:33.2px;" width="9.8" height="10.2" viewBox="0 0 9.8 10.2"><rect x="0.5" y="0.5" width="8.8" height="9" fill="#e8c63a" stroke="#6a5a20" stroke-width="0.7"/><path d="M1 9L5.4 2.6L8.8 9Z" fill="#2a3c9c"/><circle cx="6.8" cy="3" r="1.6" fill="#3a50b8" stroke="#1c2870" stroke-width="0.4"/><path d="M2 6.4L4 4.8" stroke="#f6f0d0" stroke-width="0.7"/></svg>
<div style="left:485px;top:32.5px;width:1px;height:13px;background:#d6d6e0"></div>
<div style="left:486px;top:32.5px;width:1px;height:13px;background:#fbfbfd"></div>
<svg class="a" style="left:489px;top:33.4px;" width="11" height="10.4" viewBox="0 0 11 10.4"><rect x="0.6" y="0.6" width="9.8" height="6.8" fill="#fbf3ea" stroke="#7c5c48" stroke-width="0.8"/><path d="M2.4 5.8L8.4 1.8V5.8Z" fill="#e8862a"/><rect x="2.4" y="4.6" width="1.8" height="1.2" fill="#c8521a"/><path d="M3.2 9.8L5.4 7.4L7.6 9.8" fill="none" stroke="#5a5a6a" stroke-width="0.8"/></svg>
<div style="left:505px;top:30.5px;width:6px;height:16px;background:linear-gradient(#f1f0f7,#bebdd0);border-radius:1px"></div>
<svg class="a" style="left:506px;top:41px;" width="4" height="4" viewBox="0 0 4 4"><path d="M0.3 0.3H3.7V1H0.3ZM0.3 1.6H3.7L2 3.6Z" fill="#15151c"/></svg>
<svg class="a" style="left:2px;top:51px;" width="2" height="12" viewBox="0 0 2 12"><rect x="0" y="0" width="1.1" height="1.1" fill="#9a9aae"/><rect x="0" y="2.6" width="1.1" height="1.1" fill="#9a9aae"/><rect x="0" y="5.2" width="1.1" height="1.1" fill="#9a9aae"/><rect x="0" y="7.8" width="1.1" height="1.1" fill="#9a9aae"/></svg>
<svg class="a" style="left:8.8px;top:50.8px;" width="10.4" height="10" viewBox="0 0 10.4 10"><rect x="1.6" y="0.5" width="8.2" height="7.4" fill="#eef1f8" stroke="#7e8aa6" stroke-width="0.7"/><rect x="0.5" y="2.4" width="7.4" height="7" fill="#f7f8fc" stroke="#6a7694" stroke-width="0.7"/><path d="M2 5.6L3.6 7.6L6.4 3.8" fill="none" stroke="#4a5a84" stroke-width="1"/></svg>
<div style="left:23px;top:50px;width:1px;height:13px;background:#d6d6e0"></div>
<div style="left:24px;top:50px;width:1px;height:13px;background:#fbfbfd"></div>
<svg class="a" style="left:31px;top:50.6px;" width="6.6" height="10.4" viewBox="0 0 6.6 10.4"><path d="M3.3 0.4L5 3V8H1.6V3Z" fill="#f2c02a" stroke="#7a5a10" stroke-width="0.5"/><path d="M3.3 0.4L4.3 2H2.3Z" fill="#e0662a"/><rect x="0.6" y="8" width="5.4" height="2" fill="#22222a"/><rect x="2.8" y="3.6" width="1" height="3" fill="#8a5a10"/></svg>
<svg class="a" style="left:43.4px;top:52.6px;" width="9.6" height="7.6" viewBox="0 0 9.6 7.6"><path d="M2.6 1.8H9.2M0.6 5.6H7" stroke="#3a6ac0" stroke-width="1.1"/><path d="M3 0.2L0.4 1.8L3 3.4Z" fill="#2c56a8"/><path d="M6.4 4L9 5.6L6.4 7.2Z" fill="#2c56a8"/><path d="M6.6 6L9.2 7.4" stroke="#3a6ac0" stroke-width="0.8"/></svg>
<svg class="a" style="left:56.8px;top:55.4px;" width="3.6" height="2.6" viewBox="0 0 3.6 2.6"><path d="M0 0.2H3.6L1.8 2.5Z" fill="#1a1a24"/></svg>
<div style="left:67.5px;top:50.2px;width:44px;height:12.6px;background:#fff;border:1px solid #8f99b8"></div>
<div style="left:101.3px;top:51.2px;width:9.2px;height:10.6px;background:linear-gradient(#fdfdff,#d5d6e8);border:0.6px solid #a9aec8;border-radius:1px"></div>
<svg class="a" style="left:102.7px;top:53.9px;" width="6.4" height="5" viewBox="0 0 6.4 5"><path d="M0.9 1L3.2 3.6L5.5 1" fill="none" stroke="#15151f" stroke-width="1.3"/></svg>
<div style="left:70.2px;top:56px;width:30.4px;height:0.9px;background:#15151c"></div>
<div style="left:119px;top:50.2px;width:37.4px;height:12.6px;background:#fff;border:1px solid #8f99b8"></div>
<span class="t" style="left:120.8px;top:51.05px;height:10.7px;font-size:6.7px;color:#15151c;font-family:'Liberation Sans',sans-serif;letter-spacing:-0.3px;--l:7.5px;"><span class="l">0.00</span><span class="c">公分</span></span>
<div style="left:147.6px;top:51.2px;width:7.8px;height:10.6px;background:linear-gradient(#fdfdff,#d9dae9);border:0.6px solid #a9aec8;border-radius:1px"></div>
<svg class="a" style="left:148.6px;top:52.4px;" width="5.8" height="8" viewBox="0 0 5.8 8"><path d="M1 3L2.9 1.2L4.8 3M1 5L2.9 6.8L4.8 5" fill="none" stroke="#15151f" stroke-width="1"/></svg>
<div style="left:161.7px;top:50.2px;width:51.6px;height:12.6px;background:#fff;border:1px solid #8f99b8"></div>
<div style="left:203.1px;top:51.2px;width:9.2px;height:10.6px;background:linear-gradient(#fdfdff,#d5d6e8);border:0.6px solid #a9aec8;border-radius:1px"></div>
<svg class="a" style="left:204.5px;top:53.9px;" width="6.4" height="5" viewBox="0 0 6.4 5"><path d="M0.9 1L3.2 3.6L5.5 1" fill="none" stroke="#15151f" stroke-width="1.3"/></svg>
<div style="left:164px;top:53.2px;width:10.4px;height:6.8px;background:#000"></div>
<span class="t" style="left:177.5px;top:51.1px;height:11px;font-size:7px;color:#15151c;"><span class="c">黑色</span></span>
<svg class="a" style="left:220.4px;top:51px;" width="10" height="10.2" viewBox="0 0 10 10.2"><path d="M2.6 3.6L5.8 0.9L9.4 4.8L5.4 8.4Z" fill="#f2f4f9" stroke="#27324e" stroke-width="0.9"/><path d="M4.4 0.6L3.6 4.6" stroke="#27324e" stroke-width="0.8"/><path d="M2.6 3.8C0.6 4.6 0.3 6.8 1.6 9C2.6 7 3 5.6 2.6 3.8Z" fill="#2f5cb0" stroke="#1c3a7c" stroke-width="0.3"/><path d="M5.4 8.4L9.4 4.8L9 7.6Z" fill="#55627e"/></svg>
<div style="left:237.5px;top:50.2px;width:41.8px;height:12.6px;background:#fff;border:1px solid #8f99b8"></div>
<div style="left:269.1px;top:51.2px;width:9.2px;height:10.6px;background:linear-gradient(#fdfdff,#d5d6e8);border:0.6px solid #a9aec8;border-radius:1px"></div>
<svg class="a" style="left:270.5px;top:53.9px;" width="6.4" height="5" viewBox="0 0 6.4 5"><path d="M0.9 1L3.2 3.6L5.5 1" fill="none" stroke="#15151f" stroke-width="1.3"/></svg>
<span class="t" style="left:239.6px;top:51.1px;height:11px;font-size:7px;color:#15151c;"><span class="c">顏色</span></span>
<div style="left:281px;top:50.2px;width:65.3px;height:12.6px;background:#fff;border:1px solid #8f99b8"></div>
<div style="left:336.1px;top:51.2px;width:9.2px;height:10.6px;background:linear-gradient(#fdfdff,#d5d6e8);border:0.6px solid #a9aec8;border-radius:1px"></div>
<svg class="a" style="left:337.5px;top:53.9px;" width="6.4" height="5" viewBox="0 0 6.4 5"><path d="M0.9 1L3.2 3.6L5.5 1" fill="none" stroke="#15151f" stroke-width="1.3"/></svg>
<div style="left:283.2px;top:53.2px;width:9.6px;height:6.8px;background:#a9d1ec;border:0.7px solid #2a4f7a"></div>
<span class="t" style="left:294.4px;top:51.1px;height:11px;font-size:7px;color:#15151c;"><span class="c">藍色</span><span class="l">&nbsp;8</span></span>
<svg class="a" style="left:355px;top:51.6px;" width="9.8" height="8.6" viewBox="0 0 9.8 8.6"><rect x="2.2" y="2.4" width="7" height="5.6" fill="#4a5a78"/><rect x="0.5" y="0.5" width="7" height="5.6" fill="#5ab4ec" stroke="#1c5c9c" stroke-width="0.7"/></svg>
<div style="left:371px;top:49px;width:6px;height:14.5px;background:linear-gradient(#f1f0f7,#bebdd0);border-radius:1px"></div>
<svg class="a" style="left:372px;top:58px;" width="4" height="4" viewBox="0 0 4 4"><path d="M0.3 0.3H3.7V1H0.3ZM0.3 1.6H3.7L2 3.6Z" fill="#15151c"/></svg>
<svg class="a" style="left:2px;top:402px;" width="2" height="13" viewBox="0 0 2 13"><rect x="0" y="0" width="1.1" height="1.1" fill="#9a9aae"/><rect x="0" y="2.6" width="1.1" height="1.1" fill="#9a9aae"/><rect x="0" y="5.2" width="1.1" height="1.1" fill="#9a9aae"/><rect x="0" y="7.8" width="1.1" height="1.1" fill="#9a9aae"/><rect x="0" y="10.4" width="1.1" height="1.1" fill="#9a9aae"/></svg>
<div style="left:7.6px;top:399.8px;width:14.2px;height:16.4px;background:#fbfbfe;border:1px solid #9a9ab0;border-radius:1.5px"></div>
<svg class="a" style="left:11px;top:403px;" width="7" height="10" viewBox="0 0 7 10"><path d="M0.8 0.6V7.6L2.6 6L3.9 9L5 8.5L3.8 5.6H6Z" fill="#fff" stroke="#15151c" stroke-width="0.7"/></svg>
<div style="left:24.4px;top:401px;width:1px;height:14px;background:#d6d6e0"></div>
<div style="left:25.4px;top:401px;width:1px;height:14px;background:#fbfbfd"></div>
<svg class="a" style="left:28.6px;top:403.4px;" width="10" height="10" viewBox="0 0 10 10"><path d="M0.8 9L9 0.8" stroke="#3a5ea4" stroke-width="1.1"/></svg>
<svg class="a" style="left:43.6px;top:405px;" width="9" height="7" viewBox="0 0 9 7"><path d="M0.4 3.5H7.6M5.2 0.8L8 3.5L5.2 6.2" fill="none" stroke="#2c5ca8" stroke-width="1.1"/></svg>
<svg class="a" style="left:57.8px;top:405px;" width="10.4" height="7" viewBox="0 0 10.4 7"><rect x="0.5" y="0.5" width="9.4" height="6" fill="#55a6e2" stroke="#1c4e94" stroke-width="0.8"/></svg>
<svg class="a" style="left:72.4px;top:405px;" width="10" height="7" viewBox="0 0 10 7"><ellipse cx="5" cy="3.5" rx="4.5" ry="3" fill="#55a6e2" stroke="#1c4e94" stroke-width="0.8"/></svg>
<span class="t" style="left:88px;top:402.6px;height:12px;font:bold 12px 'Liberation Serif',serif;color:#2a3a54">T</span>
<svg class="a" style="left:102.6px;top:405.4px;" width="8" height="7" viewBox="0 0 8 7"><path d="M0.6 0.6V6.4M7.4 0.6V6.4M0.6 3.5H7.4" stroke="#2a4a84" stroke-width="1.1"/></svg>
<div style="left:116.4px;top:401px;width:1px;height:14px;background:#d6d6e0"></div>
<div style="left:117.4px;top:401px;width:1px;height:14px;background:#fbfbfd"></div>
<svg class="a" style="left:120.6px;top:403.4px;" width="11" height="10.6" viewBox="0 0 11 10.6"><path d="M1 7.4C3 5.4 4.4 9.4 6.6 8.2S9.4 8.6 10.4 8.6" fill="none" stroke="#3a3ab4" stroke-width="1"/><path d="M3.6 6.4L8.2 1L9.8 2.4L5.2 7.6Z" fill="#eac43a" stroke="#8a6a1c" stroke-width="0.4"/><path d="M8.2 1L9 0.3L10.4 1.6L9.8 2.4Z" fill="#e05a6a"/></svg>
<svg class="a" style="left:135.2px;top:407.4px;" width="3.6" height="2.6" viewBox="0 0 3.6 2.6"><path d="M0 0.2H3.6L1.8 2.5Z" fill="#1a1a24"/></svg>
<svg class="a" style="left:143px;top:403.8px;" width="9.6" height="9.6" viewBox="0 0 9.6 9.6"><path d="M1.6 1.6H4.8V7.6H8" fill="none" stroke="#2c5ca8" stroke-width="0.9"/><circle cx="1.6" cy="1.6" r="1.3" fill="#6ab0e8" stroke="#1c4e94" stroke-width="0.5"/><circle cx="8" cy="7.6" r="1.3" fill="#6ab0e8" stroke="#1c4e94" stroke-width="0.5"/></svg>
<svg class="a" style="left:156.6px;top:407.4px;" width="3.6" height="2.6" viewBox="0 0 3.6 2.6"><path d="M0 0.2H3.6L1.8 2.5Z" fill="#1a1a24"/></svg>
<svg class="a" style="left:164px;top:402.8px;" width="11" height="11" viewBox="0 0 11 11"><path d="M5.5 0.6L10.4 5.5L5.5 10.4L0.6 5.5Z" fill="#4aa2e4" stroke="#1c5ca4" stroke-width="0.8"/></svg>
<svg class="a" style="left:178.4px;top:407.4px;" width="3.6" height="2.6" viewBox="0 0 3.6 2.6"><path d="M0 0.2H3.6L1.8 2.5Z" fill="#1a1a24"/></svg>
<svg class="a" style="left:185.6px;top:403.2px;" width="10.4" height="10.4" viewBox="0 0 10.4 10.4"><circle cx="5.2" cy="5.2" r="4.6" fill="#52a8ea" stroke="#1c5ca4" stroke-width="0.8"/><circle cx="3.6" cy="4" r="0.6" fill="#123c74"/><circle cx="6.8" cy="4" r="0.6" fill="#123c74"/><path d="M3 6.4Q5.2 8.4 7.4 6.4" fill="none" stroke="#123c74" stroke-width="0.7"/></svg>
<svg class="a" style="left:200px;top:407.4px;" width="3.6" height="2.6" viewBox="0 0 3.6 2.6"><path d="M0 0.2H3.6L1.8 2.5Z" fill="#1a1a24"/></svg>
<svg class="a" style="left:207px;top:405.2px;" width="10.6" height="6.6" viewBox="0 0 10.6 6.6"><path d="M0.5 3.3L3.2 0.6V2H7.4V0.6L10.1 3.3L7.4 6V4.6H3.2V6Z" fill="#58aaea" stroke="#1c5ca4" stroke-width="0.7"/></svg>
<svg class="a" style="left:222px;top:407.4px;" width="3.6" height="2.6" viewBox="0 0 3.6 2.6"><path d="M0 0.2H3.6L1.8 2.5Z" fill="#1a1a24"/></svg>
<svg class="a" style="left:229px;top:402.8px;" width="9.6" height="10.6" viewBox="0 0 9.6 10.6"><rect x="0.5" y="0.5" width="8.6" height="9.6" fill="#3a84d4" stroke="#1c4e94" stroke-width="0.8"/><rect x="0.9" y="0.9" width="7.8" height="1.8" fill="#7ab8ee"/><rect x="0.9" y="2.8" width="1.6" height="7" fill="#62a8e6"/></svg>
<svg class="a" style="left:243.6px;top:407.4px;" width="3.6" height="2.6" viewBox="0 0 3.6 2.6"><path d="M0 0.2H3.6L1.8 2.5Z" fill="#1a1a24"/></svg>
<svg class="a" style="left:250.6px;top:403px;" width="10.6" height="10.4" viewBox="0 0 10.6 10.4"><path d="M0.6 0.6H10V6.6H4.2L2 9.6V6.6H0.6Z" fill="#58aaea" stroke="#1c5ca4" stroke-width="0.8"/></svg>
<svg class="a" style="left:265.4px;top:407.4px;" width="3.6" height="2.6" viewBox="0 0 3.6 2.6"><path d="M0 0.2H3.6L1.8 2.5Z" fill="#1a1a24"/></svg>
<svg class="a" style="left:272.4px;top:402.6px;" width="10.6" height="10.4" viewBox="0 0 10.6 10.4"><path d="M5.3 0.8L6.7 4H10L7.4 6.1L8.4 9.6L5.3 7.5L2.2 9.6L3.2 6.1L0.6 4H3.9Z" fill="#52a4e6" stroke="#1c4e94" stroke-width="0.8"/></svg>
<svg class="a" style="left:287.2px;top:407.4px;" width="3.6" height="2.6" viewBox="0 0 3.6 2.6"><path d="M0 0.2H3.6L1.8 2.5Z" fill="#1a1a24"/></svg>
<div style="left:294px;top:401px;width:1px;height:14px;background:#d6d6e0"></div>
<div style="left:295px;top:401px;width:1px;height:14px;background:#fbfbfd"></div>
<svg class="a" style="left:300.4px;top:403.4px;" width="9.6" height="9.6" viewBox="0 0 9.6 9.6"><path d="M1.4 8.2L3 1.6L8.2 2.6L6 5.4L8.4 8.2" fill="none" stroke="#2a2a3a" stroke-width="0.7"/><rect x="0.5" y="7.4" width="1.7" height="1.7" fill="#1c1c2c"/><rect x="2.2" y="0.7" width="1.7" height="1.7" fill="#1c1c2c"/><rect x="7.4" y="1.7" width="1.7" height="1.7" fill="#1c1c2c"/><rect x="7.5" y="7.4" width="1.7" height="1.7" fill="#1c1c2c"/></svg>
<svg class="a" style="left:314.6px;top:403.4px;" width="10.4" height="10" viewBox="0 0 10.4 10"><path d="M1 8.8L2.8 6.2L7.6 1.4L9.2 2.8L4.4 7.8Z" fill="#d89a2a" stroke="#5a3a10" stroke-width="0.6"/><path d="M1 8.8L2.8 6.2L4.4 7.8Z" fill="#2a2a2a"/><path d="M7.6 1.4L8.4 0.6L10 2L9.2 2.8Z" fill="#f2d25a"/></svg>
<div style="left:328.6px;top:401px;width:1px;height:14px;background:#d6d6e0"></div>
<div style="left:329.6px;top:401px;width:1px;height:14px;background:#fbfbfd"></div>
<svg class="a" style="left:333px;top:403.6px;" width="10.6" height="9.6" viewBox="0 0 10.6 9.6"><rect x="0.5" y="1.6" width="9.6" height="7.4" fill="#b87a3a" stroke="#6a4418" stroke-width="0.7"/><rect x="3.2" y="0.4" width="4.2" height="1.8" fill="#d89a4a" stroke="#6a4418" stroke-width="0.4"/><rect x="2" y="3" width="6.6" height="4.8" fill="#f4f4f8"/><path d="M3.6 7L5.3 3.6L7 7" fill="none" stroke="#2a4a9a" stroke-width="0.9"/></svg>
<svg class="a" style="left:347.6px;top:402.8px;" width="11" height="10.6" viewBox="0 0 11 10.6"><circle cx="6.6" cy="4" r="3.4" fill="#f0a02a" stroke="#a85a10" stroke-width="0.5"/><rect x="0.5" y="4.4" width="5.4" height="5.4" fill="#d8422a" stroke="#8a2210" stroke-width="0.5"/><path d="M4.6 10L7.4 5.4L10.4 10Z" fill="#2a62b8" stroke="#16407c" stroke-width="0.4"/><circle cx="5.6" cy="7.6" r="1.6" fill="#3a9a4a"/></svg>
<svg class="a" style="left:362.4px;top:403.6px;" width="10.6" height="9.6" viewBox="0 0 10.6 9.6"><rect x="0.5" y="1.4" width="9.6" height="7.6" fill="#a8782a" stroke="#5a4010" stroke-width="0.7"/><rect x="3.2" y="0.4" width="4.2" height="1.6" fill="#c89a3a" stroke="#5a4010" stroke-width="0.4"/><rect x="2" y="3" width="6.6" height="4.6" fill="#5aa45a"/><path d="M5.3 3.6L6 4.8H7.2L6.2 5.6L6.6 6.8L5.3 6.1L4 6.8L4.4 5.6L3.4 4.8H4.6Z" fill="#f4f4f0"/></svg>
<div style="left:376.8px;top:401px;width:1px;height:14px;background:#d6d6e0"></div>
<div style="left:377.8px;top:401px;width:1px;height:14px;background:#fbfbfd"></div>
<svg class="a" style="left:381.4px;top:403.2px;" width="10.4" height="10.4" viewBox="0 0 10.4 10.4"><path d="M7.6 2.4A3.6 3.6 0 1 0 8.8 5.6" fill="none" stroke="#2d5ea6" stroke-width="2.2"/><path d="M5.6 0.4L10 2L6.8 5Z" fill="#2d5ea6"/><circle cx="5.2" cy="5.4" r="1.3" fill="#dfe8f6"/></svg>
<svg class="a" style="left:395.8px;top:403px;" width="10.4" height="10.4" viewBox="0 0 10.4 10.4"><rect x="0.8" y="0.8" width="9" height="8.8" fill="#fdfdfe" stroke="#a8a8b8" stroke-width="0.6"/><rect x="0.3" y="0.3" width="1.1" height="9.8" fill="#2e8a3a"/><rect x="2.2" y="3.6" width="2.6" height="3" fill="#3a8ab4"/><path d="M5.4 5.2L7.4 3.4L9.4 5.2L7.4 7Z" fill="#8a4a2a"/></svg>
<svg class="a" style="left:408.8px;top:407.4px;" width="3.6" height="2.6" viewBox="0 0 3.6 2.6"><path d="M0 0.2H3.6L1.8 2.5Z" fill="#1a1a24"/></svg>
<svg class="a" style="left:417.6px;top:402.8px;" width="11" height="10.8" viewBox="0 0 11 10.8"><rect x="3.6" y="0.6" width="6.6" height="6.6" fill="#2a2a3a"/><rect x="0.6" y="3.6" width="6.6" height="6.6" fill="#2a2a3a"/><rect x="2" y="2" width="6.8" height="6.8" fill="#f2d22a" stroke="#8a6a10" stroke-width="0.7"/></svg>
<svg class="a" style="left:432.4px;top:407.4px;" width="3.6" height="2.6" viewBox="0 0 3.6 2.6"><path d="M0 0.2H3.6L1.8 2.5Z" fill="#1a1a24"/></svg>
<div style="left:439.6px;top:401px;width:1px;height:14px;background:#d6d6e0"></div>
<div style="left:440.6px;top:401px;width:1px;height:14px;background:#fbfbfd"></div>
<svg class="a" style="left:444px;top:403.6px;" width="10" height="9.6" viewBox="0 0 10 9.6"><path d="M1.6 1.2C1.2 5.6 3 8.6 6.4 8.2C8.6 7.8 9 5 8.2 3.4L6.2 4.2C6.6 5.6 6 6.2 5 6C3.8 5.6 3.8 3.6 4 1.4Z" fill="#dcdce6" stroke="#cacad6" stroke-width="0.4"/></svg>
<svg class="a" style="left:462px;top:403px;" width="8" height="10.4" viewBox="0 0 8 10.4"><path d="M3.6 0.8C6 0.4 7 2.6 5.4 4.4C4.6 5.4 4.6 7.6 5 9.6H2.6C2.2 7 2.4 5 3.6 3.8C4.4 3 4 2.2 3 2.6Z" fill="#dcdce6" stroke="#cacad6" stroke-width="0.4"/><path d="M1 5.2H4" stroke="#d2d2de" stroke-width="0.7"/></svg>
<div style="left:475.4px;top:400px;width:6px;height:16.4px;background:linear-gradient(#f1f0f7,#bebdd0);border-radius:1px"></div>
<svg class="a" style="left:476.4px;top:410.9px;" width="4" height="4" viewBox="0 0 4 4"><path d="M0.3 0.3H3.7V1H0.3ZM0.3 1.6H3.7L2 3.6Z" fill="#15151c"/></svg>
<div style="left:191.5px;top:419px;width:1px;height:13px;background:#b9b8cc"></div>
<div style="left:192.5px;top:419px;width:1px;height:13px;background:#f6f6fa"></div>
<div style="left:321.6px;top:419px;width:1px;height:13px;background:#b9b8cc"></div>
<div style="left:322.6px;top:419px;width:1px;height:13px;background:#f6f6fa"></div>
<div style="left:333px;top:419px;width:1px;height:13px;background:#b9b8cc"></div>
<div style="left:334px;top:419px;width:1px;height:13px;background:#f6f6fa"></div>
<div style="left:350px;top:419px;width:1px;height:13px;background:#b9b8cc"></div>
<div style="left:351px;top:419px;width:1px;height:13px;background:#f6f6fa"></div>
<div style="left:380px;top:419px;width:1px;height:13px;background:#b9b8cc"></div>
<div style="left:381px;top:419px;width:1px;height:13px;background:#f6f6fa"></div>
<div style="left:496px;top:419px;width:1px;height:13px;background:#b9b8cc"></div>
<div style="left:497px;top:419px;width:1px;height:13px;background:#f6f6fa"></div>
<div style="left:577px;top:419px;width:1px;height:13px;background:#b9b8cc"></div>
<div style="left:578px;top:419px;width:1px;height:13px;background:#f6f6fa"></div>
<svg class="a" style="left:196px;top:421.4px;" width="9" height="6.6" viewBox="0 0 9 6.6"><path d="M0.6 2.2H8M0.6 2.2V6M1 6H8V2.2" fill="none" stroke="#3a4a74" stroke-width="0.7"/><path d="M1.2 0.2V2.2M0.2 1.2H2.4" stroke="#3a4a74" stroke-width="0.6"/></svg>
<span class="t" style="left:208.8px;top:419.25px;height:10.7px;font-size:6.7px;color:#15151c;font-family:'Liberation Sans',sans-serif;letter-spacing:-0.12px;--l:6.7px;"><span class="l">7.32 / 5.20</span></span>
<svg class="a" style="left:260.6px;top:420.6px;" width="8" height="8" viewBox="0 0 8 8"><rect x="2.6" y="2.2" width="4.8" height="5" fill="none" stroke="#3a4a74" stroke-width="0.7"/><path d="M3 0.6V2.2M7 0.6V2.2" stroke="#3a4a74" stroke-width="0.6"/><rect x="0.4" y="3" width="0.9" height="0.9" fill="#3a4a74"/><rect x="0.4" y="5.4" width="0.9" height="0.9" fill="#3a4a74"/></svg>
<span class="t" style="left:271.2px;top:419.25px;height:10.7px;font-size:6.7px;color:#15151c;font-family:'Liberation Sans',sans-serif;letter-spacing:-0.12px;--l:6.7px;"><span class="l">0.00 x 0.00</span></span>
<span class="t" style="left:326px;top:419.4px;height:12px;font-size:8px;color:#15151c;font-family:'Liberation Sans',sans-serif;"><span class="l">*</span></span>
<span class="t" style="left:353.6px;top:419px;height:11.2px;font-size:7.2px;color:#0c0c12;--l:7.4px;"><span class="cb">頁</span><span class="l">&nbsp;1 / 1</span></span>
<span class="t" style="left:383.2px;top:418.6px;height:11.6px;font-size:7.6px;color:#0c0c12;letter-spacing:-0.3px;--l:7.7px;-webkit-text-stroke:0.15px #0c0c12;"><span class="l">lyt-darkblue</span></span>
<svg class="a" style="left:495.6px;top:420.6px;" width="9" height="9" viewBox="0 0 9 9"><circle cx="4.5" cy="4.5" r="3.6" fill="#eef3fb" stroke="#5a7ab4" stroke-width="0.8"/><path d="M2.8 4.5H6.2" stroke="#2a4a8a" stroke-width="0.9"/></svg>
<div style="left:509px;top:424.9px;width:55.6px;height:0.8px;background:#9a9aac"></div>
<div style="left:535px;top:421.6px;width:0.8px;height:7.4px;background:#8a8a9c"></div>
<svg class="a" style="left:519.2px;top:421.6px;" width="6" height="7.4" viewBox="0 0 6 7.4"><path d="M1 0.8H5V4.2L3 6.6L1 4.2Z" fill="#5a88cc" stroke="#223f7e" stroke-width="0.9" stroke-linejoin="round"/></svg>
<svg class="a" style="left:566.6px;top:420.6px;" width="9" height="9" viewBox="0 0 9 9"><circle cx="4.5" cy="4.5" r="3.6" fill="#eef3fb" stroke="#5a7ab4" stroke-width="0.8"/><path d="M2.8 4.5H6.2M4.5 2.8V6.2" stroke="#2a4a8a" stroke-width="0.9"/></svg>
<span class="t" style="left:581.2px;top:419.1px;height:11px;font-size:7px;color:#0c0c12;font-family:'Liberation Sans',sans-serif;--l:7px;-webkit-text-stroke:0.15px #0c0c12;"><span class="l">56%</span></span>
</div></body></html>
